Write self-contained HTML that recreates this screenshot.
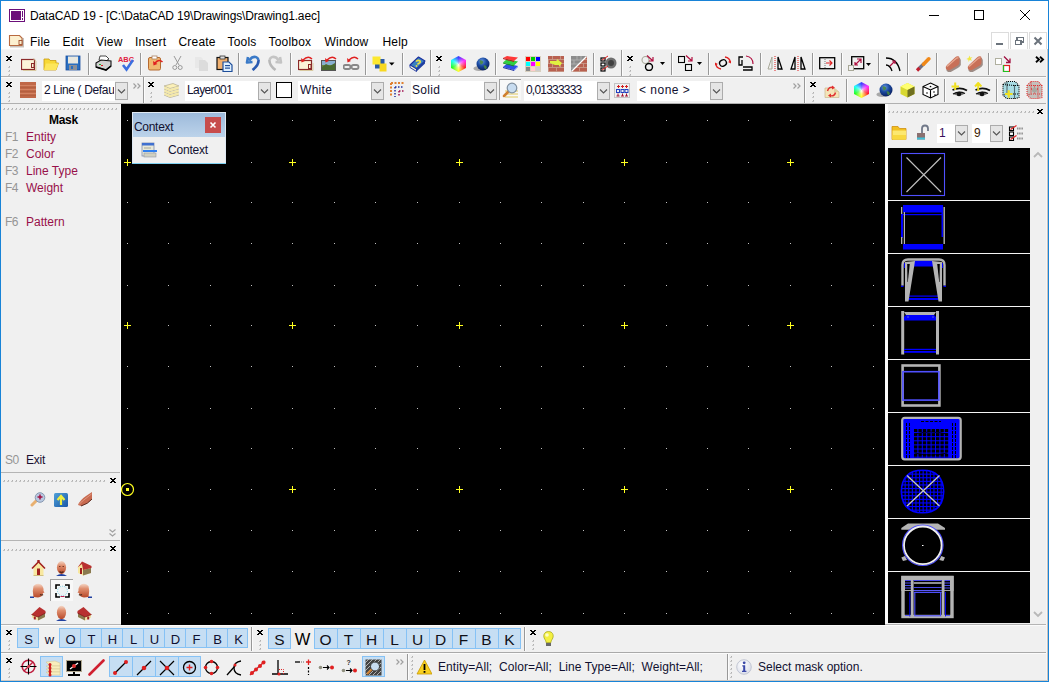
<!DOCTYPE html><html><head><meta charset="utf-8"><style>
html,body{margin:0;padding:0;}
body{width:1049px;height:682px;overflow:hidden;position:relative;background:#f0f0f0;font-family:"Liberation Sans",sans-serif;font-size:12px;}
svg{display:block}
</style></head><body>
<div style="position:absolute;left:1px;top:1px;width:1047px;height:48px;background:#fff"></div>
<svg style="position:absolute;left:9px;top:9px;" width="16" height="13" viewBox="0 0 16 13" shape-rendering="crispEdges"><rect x="0" y="0" width="16" height="13" fill="#6b0f7a"/><rect x="1" y="1" width="14" height="11" fill="#fff"/><rect x="2" y="2" width="10" height="9" fill="#6b0f7a"/><rect x="13" y="2" width="1" height="6" fill="#6b0f7a"/><rect x="13" y="9" width="1" height="2" fill="#6b0f7a"/></svg>
<div style="position:absolute;left:30px;top:9px;font-size:12px;line-height:15px;color:#000;font-weight:normal;white-space:pre;letter-spacing:-0.15px">DataCAD 19 - [C:\DataCAD 19\Drawings\Drawing1.aec]</div>
<div style="position:absolute;left:929px;top:15px;width:10px;height:1px;background:#000"></div>
<div style="position:absolute;left:974px;top:10px;width:10px;height:10px;border:1px solid #000;box-sizing:border-box"></div>
<svg style="position:absolute;left:1019px;top:9px;" width="12" height="12" viewBox="0 0 12 12"><path d="M1 1 L11 11 M11 1 L1 11" stroke="#000" stroke-width="1"/></svg>
<svg style="position:absolute;left:8px;top:34px;" width="17" height="14" viewBox="0 0 17 14"><rect x="2" y="4" width="14" height="9.5" fill="#605040" opacity="0.35"/><path d="M1.5 1.5 L11.5 1.5 L14 4 L14 11.5 L1.5 11.5 Z" fill="#fcf0d0" stroke="#b86a40" stroke-width="1.1"/><rect x="11" y="6.5" width="3" height="4" fill="#fcf0d0" stroke="#a05030" stroke-width="0.9"/></svg>
<div style="position:absolute;left:30px;top:35px;font-size:12px;line-height:15px;color:#000;font-weight:normal;white-space:pre;letter-spacing:0.2px">File</div>
<div style="position:absolute;left:62.5px;top:35px;font-size:12px;line-height:15px;color:#000;font-weight:normal;white-space:pre;letter-spacing:0.2px">Edit</div>
<div style="position:absolute;left:96px;top:35px;font-size:12px;line-height:15px;color:#000;font-weight:normal;white-space:pre;letter-spacing:0.2px">View</div>
<div style="position:absolute;left:135px;top:35px;font-size:12px;line-height:15px;color:#000;font-weight:normal;white-space:pre;letter-spacing:0.2px">Insert</div>
<div style="position:absolute;left:178.5px;top:35px;font-size:12px;line-height:15px;color:#000;font-weight:normal;white-space:pre;letter-spacing:0.2px">Create</div>
<div style="position:absolute;left:227.5px;top:35px;font-size:12px;line-height:15px;color:#000;font-weight:normal;white-space:pre;letter-spacing:0.2px">Tools</div>
<div style="position:absolute;left:268.5px;top:35px;font-size:12px;line-height:15px;color:#000;font-weight:normal;white-space:pre;letter-spacing:0.2px">Toolbox</div>
<div style="position:absolute;left:324.5px;top:35px;font-size:12px;line-height:15px;color:#000;font-weight:normal;white-space:pre;letter-spacing:0.2px">Window</div>
<div style="position:absolute;left:382.5px;top:35px;font-size:12px;line-height:15px;color:#000;font-weight:normal;white-space:pre;letter-spacing:0.2px">Help</div>
<div style="position:absolute;left:991px;top:32px;width:18px;height:18px;border:1px solid #dcdcdc;box-sizing:border-box;background:#fff"></div>
<div style="position:absolute;left:1010px;top:32px;width:18px;height:18px;border:1px solid #dcdcdc;box-sizing:border-box;background:#fff"></div>
<div style="position:absolute;left:1029px;top:32px;width:18px;height:18px;border:1px solid #dcdcdc;box-sizing:border-box;background:#fff"></div>
<div style="position:absolute;left:996px;top:43px;width:7px;height:2px;background:#6b737c"></div>
<svg style="position:absolute;left:1015px;top:37px;" width="9" height="8" viewBox="0 0 9 8" shape-rendering="crispEdges"><rect x="2" y="0" width="7" height="5" fill="none" stroke="#6b737c" stroke-width="2"/><rect x="0" y="3" width="6" height="5" fill="#fff"/><rect x="0.5" y="3.5" width="5.5" height="4" fill="none" stroke="#6b737c" stroke-width="1.5"/></svg>
<svg style="position:absolute;left:1033px;top:36px;" width="10" height="10" viewBox="0 0 10 10"><path d="M1.5 1.5 L8.5 8.5 M8.5 1.5 L1.5 8.5" stroke="#6b737c" stroke-width="2"/></svg>
<div style="position:absolute;left:1px;top:49px;width:1047px;height:27px;background:#f0f0f0"></div>
<div style="position:absolute;left:1px;top:49px;width:1047px;height:1px;background:#f6f6f6"></div>
<div style="position:absolute;left:1px;top:76px;width:1046px;height:1px;background:#b0b0b0"></div>
<div style="position:absolute;left:1px;top:77px;width:1047px;height:1px;background:#fafafa"></div>
<div style="position:absolute;left:1px;top:103px;width:1046px;height:1px;background:#b0b0b0"></div>
<svg style="position:absolute;left:6px;top:56px;" width="6" height="5" viewBox="0 0 6 5" shape-rendering="crispEdges"><rect x="0" y="0" width="1" height="1" fill="#000"/><rect x="1" y="0" width="1" height="1" fill="#000"/><rect x="4" y="0" width="1" height="1" fill="#000"/><rect x="5" y="0" width="1" height="1" fill="#000"/><rect x="1" y="1" width="1" height="1" fill="#000"/><rect x="2" y="1" width="1" height="1" fill="#000"/><rect x="3" y="1" width="1" height="1" fill="#000"/><rect x="4" y="1" width="1" height="1" fill="#000"/><rect x="2" y="2" width="1" height="1" fill="#000"/><rect x="3" y="2" width="1" height="1" fill="#000"/><rect x="1" y="3" width="1" height="1" fill="#000"/><rect x="2" y="3" width="1" height="1" fill="#000"/><rect x="3" y="3" width="1" height="1" fill="#000"/><rect x="4" y="3" width="1" height="1" fill="#000"/><rect x="0" y="4" width="1" height="1" fill="#000"/><rect x="1" y="4" width="1" height="1" fill="#000"/><rect x="4" y="4" width="1" height="1" fill="#000"/><rect x="5" y="4" width="1" height="1" fill="#000"/></svg>
<svg style="position:absolute;left:8px;top:66px;" width="2" height="12" viewBox="0 0 2 12" shape-rendering="crispEdges"><rect x="1" y="0" width="1" height="1" fill="#b0b0b0"/><rect x="0" y="1" width="2" height="1" fill="#c8c8c8"/><rect x="1" y="4" width="1" height="1" fill="#b0b0b0"/><rect x="0" y="5" width="2" height="1" fill="#c8c8c8"/><rect x="1" y="8" width="1" height="1" fill="#b0b0b0"/><rect x="0" y="9" width="2" height="1" fill="#c8c8c8"/></svg>
<svg style="position:absolute;left:21px;top:58px;" width="16" height="13" viewBox="0 0 16 13"><rect x="0.5" y="1.5" width="13" height="10" fill="#fbf3d8" stroke="#8b2a2a" stroke-width="1.2"/><rect x="10.5" y="5.5" width="2.5" height="4" fill="#fbf3d8" stroke="#8b2a2a" stroke-width="1"/><path d="M12 0.5 L15 3 L15 12.5 L2 12.5" stroke="#d8c9a0" fill="none"/></svg>
<svg style="position:absolute;left:43px;top:57px;" width="16" height="14" viewBox="0 0 16 14"><path d="M1 2 L6 2 L7 3.5 L13 3.5 L13 6 L15.5 6 L13 13 L1 13 Z" fill="#f7d835" stroke="#c89a10" stroke-width="0.8"/><path d="M3 6.5 L15.5 6.5 L13 13 L1 13 Z" fill="#fde65a"/></svg>
<svg style="position:absolute;left:65px;top:55px;" width="16" height="16" viewBox="0 0 16 16"><rect x="1" y="1" width="14" height="14" fill="#2a6fc0"/><rect x="1" y="1" width="14" height="14" fill="none" stroke="#1a4fa0" stroke-width="0.8"/><rect x="3" y="1.5" width="10" height="7" fill="#e8e8e0"/><rect x="4" y="10" width="8" height="5" fill="#8a8f98"/><rect x="6" y="11" width="2" height="3" fill="#2a6fc0"/></svg>
<div style="position:absolute;left:89px;top:53px;width:1px;height:22px;background:#fcfcfc"></div>
<div style="position:absolute;left:88px;top:53px;width:1px;height:22px;background:#989898"></div>
<svg style="position:absolute;left:95px;top:55px;" width="17" height="17" viewBox="0 0 17 17"><path d="M5 1 L11 1 L14 4 L9 7 L4 5 Z" fill="#fff" stroke="#333" stroke-width="0.9"/><path d="M1 8 L6 5 L16 6 L16 11 L11 15 L1 12 Z" fill="#d0d0d0" stroke="#111" stroke-width="1.1"/><path d="M1 12 L11 15 L16 11" fill="none" stroke="#000" stroke-width="1.6"/><rect x="4" y="9" width="2" height="1" fill="#2a2"/><rect x="6" y="10" width="2" height="1" fill="#d22"/></svg>
<svg style="position:absolute;left:118px;top:55px;" width="16" height="17" viewBox="0 0 16 17"><text x="0" y="6.5" font-family="Liberation Sans" font-weight="bold" font-size="7" fill="#e02040" textLength="16" lengthAdjust="spacingAndGlyphs">ABC</text><path d="M5 10 L8.5 14.5 L15 5" stroke="#3a6fe0" stroke-width="2.6" fill="none"/></svg>
<div style="position:absolute;left:141px;top:53px;width:1px;height:22px;background:#fcfcfc"></div>
<div style="position:absolute;left:140px;top:53px;width:1px;height:22px;background:#989898"></div>
<svg style="position:absolute;left:147px;top:55px;" width="17" height="16" viewBox="0 0 17 16"><rect x="1.5" y="2.5" width="12" height="12.5" rx="1.5" fill="#f0b870" stroke="#b66a30"/><rect x="5" y="1" width="5" height="3" fill="#fff" stroke="#aa8060" stroke-width="0.8"/><path d="M15.5 7 Q12 3.5 8 8" stroke="#e02020" stroke-width="1.5" fill="none"/><path d="M6 6 L6.5 10.5 L10.5 9" fill="#e02020"/></svg>
<svg style="position:absolute;left:172px;top:55px;" width="11" height="16" viewBox="0 0 11 16"><path d="M2 1 L7 10 M9 1 L4 10" stroke="#999" stroke-width="1"/><circle cx="2.8" cy="12.5" r="2" fill="none" stroke="#999"/><circle cx="8.2" cy="12.5" r="2" fill="none" stroke="#999"/></svg>
<svg style="position:absolute;left:194px;top:56px;" width="15" height="15" viewBox="0 0 15 15"><path d="M1 1 L7 1 L9 3 L9 12 L1 12 Z" fill="#e8e8e8"/><path d="M5 4 L11 4 L14 7 L14 15 L5 15 Z" fill="#dcdcdc"/></svg>
<svg style="position:absolute;left:216px;top:55px;" width="17" height="17" viewBox="0 0 17 17"><rect x="1" y="2.5" width="11" height="12" fill="#f0b070" stroke="#111" stroke-width="1.2"/><rect x="4" y="1" width="5" height="3" fill="#ddd" stroke="#333" stroke-width="0.8"/><path d="M7 7 L13 7 L16 10 L16 16.5 L7 16.5 Z" fill="#dff0ff" stroke="#1e4e9a" stroke-width="1.2"/><rect x="9" y="10" width="5" height="1.2" fill="#1e4e9a"/><rect x="9" y="12.5" width="5" height="1.2" fill="#1e4e9a"/></svg>
<div style="position:absolute;left:239px;top:53px;width:1px;height:22px;background:#fcfcfc"></div>
<div style="position:absolute;left:238px;top:53px;width:1px;height:22px;background:#989898"></div>
<svg style="position:absolute;left:244px;top:55px;" width="17" height="16" viewBox="0 0 17 16"><path d="M14.5 5 Q13 0.5 8 2.5 L5 5.5 M4 2 L3 7.5 L8.5 7" stroke="#3a7ac8" stroke-width="2.6" fill="none" stroke-linejoin="round"/><path d="M14.5 5 Q15 10 8.5 15" stroke="#2a5ab0" stroke-width="2.6" fill="none"/></svg>
<svg style="position:absolute;left:267px;top:55px;" width="17" height="16" viewBox="0 0 17 16"><path d="M2.5 5 Q4 0.5 9 2.5 L12 5.5 M13 2 L14 7.5 L8.5 7" stroke="#c4c4c4" stroke-width="2.6" fill="none" stroke-linejoin="round"/><path d="M2.5 5 Q2 10 8.5 15" stroke="#b8b8b8" stroke-width="2.6" fill="none"/></svg>
<div style="position:absolute;left:291px;top:53px;width:1px;height:22px;background:#fcfcfc"></div>
<div style="position:absolute;left:290px;top:53px;width:1px;height:22px;background:#989898"></div>
<svg style="position:absolute;left:298px;top:55px;" width="16" height="16" viewBox="0 0 16 16"><rect x="0.5" y="5.5" width="13" height="9" fill="#fbf3d8" stroke="#8b2a2a" stroke-width="1.2"/><rect x="10.5" y="9.5" width="2.5" height="4" fill="#fbf3d8" stroke="#8b2a2a" stroke-width="1"/><path d="M1.5 15.5 H15 V8" stroke="#d8c9a0" fill="none"/><path d="M14 4 Q10 0 5 5" stroke="#e02020" stroke-width="1.4" fill="none"/><path d="M3 3 L3.5 7.5 L7 6" fill="#e02020"/></svg>
<svg style="position:absolute;left:321px;top:55px;" width="16" height="16" viewBox="0 0 16 16"><rect x="0.5" y="5.5" width="14" height="10" fill="#6a8a40" stroke="#555"/><rect x="1" y="6" width="13" height="4" fill="#8ab0d0"/><path d="M1 12 L5 9 L9 11 L14 8 L14 15 L1 15 Z" fill="#4a6a30"/><path d="M15 4 Q11 0 6 5" stroke="#e02020" stroke-width="1.4" fill="none"/><path d="M4 3 L4.5 7.5 L8 6" fill="#e02020"/></svg>
<svg style="position:absolute;left:343px;top:55px;" width="17" height="16" viewBox="0 0 17 16"><rect x="0.5" y="10" width="7" height="4" rx="2" fill="none" stroke="#888" stroke-width="1.8"/><rect x="8.5" y="10" width="7" height="4" rx="2" fill="none" stroke="#888" stroke-width="1.8"/><path d="M15 4 Q11 0 6 5" stroke="#e02020" stroke-width="1.4" fill="none"/><path d="M4 3 L4.5 7.5 L8 6" fill="#e02020"/></svg>
<div style="position:absolute;left:366px;top:53px;width:1px;height:22px;background:#fcfcfc"></div>
<div style="position:absolute;left:365px;top:53px;width:1px;height:22px;background:#989898"></div>
<svg style="position:absolute;left:372px;top:56px;" width="25" height="17" viewBox="0 0 25 17"><rect x="3" y="3" width="9.5" height="9.5" fill="#2a5aa8"/><rect x="0.5" y="0.5" width="8" height="8" fill="#fce830"/><rect x="7.5" y="7.5" width="7" height="8" fill="#f8d820"/><path d="M17 6.5 L22.5 6.5 L19.75 9.5 Z" fill="#000"/></svg>
<div style="position:absolute;left:403px;top:53px;width:1px;height:22px;background:#fcfcfc"></div>
<div style="position:absolute;left:402px;top:53px;width:1px;height:22px;background:#989898"></div>
<svg style="position:absolute;left:409px;top:56px;" width="17" height="16" viewBox="0 0 17 16"><path d="M1 9 L9.5 1 L16 5 L7.5 13 Z" fill="#3a80c0" stroke="#1a30a0" stroke-width="1.1" stroke-linejoin="round"/><path d="M1 9 L7.5 13 L7.5 15.5 L1 11.5 Z" fill="#f0f0d0" stroke="#1a30a0" stroke-width="0.9"/><path d="M7.5 13 L16 5 L16 7.5 L7.5 15.5 Z" fill="#2040a0"/><path d="M7 5.5 Q9 3.5 11 5 Q12 6.5 9.5 7.5 L8.5 8.5" stroke="#f0e040" stroke-width="1.6" fill="none"/><circle cx="7.5" cy="10" r="0.9" fill="#f0e040"/></svg>
<div style="position:absolute;left:431px;top:50px;width:1px;height:26px;background:#fcfcfc"></div>
<div style="position:absolute;left:430px;top:50px;width:1px;height:26px;background:#989898"></div>
<svg style="position:absolute;left:436px;top:56px;" width="6" height="5" viewBox="0 0 6 5" shape-rendering="crispEdges"><rect x="0" y="0" width="1" height="1" fill="#000"/><rect x="1" y="0" width="1" height="1" fill="#000"/><rect x="4" y="0" width="1" height="1" fill="#000"/><rect x="5" y="0" width="1" height="1" fill="#000"/><rect x="1" y="1" width="1" height="1" fill="#000"/><rect x="2" y="1" width="1" height="1" fill="#000"/><rect x="3" y="1" width="1" height="1" fill="#000"/><rect x="4" y="1" width="1" height="1" fill="#000"/><rect x="2" y="2" width="1" height="1" fill="#000"/><rect x="3" y="2" width="1" height="1" fill="#000"/><rect x="1" y="3" width="1" height="1" fill="#000"/><rect x="2" y="3" width="1" height="1" fill="#000"/><rect x="3" y="3" width="1" height="1" fill="#000"/><rect x="4" y="3" width="1" height="1" fill="#000"/><rect x="0" y="4" width="1" height="1" fill="#000"/><rect x="1" y="4" width="1" height="1" fill="#000"/><rect x="4" y="4" width="1" height="1" fill="#000"/><rect x="5" y="4" width="1" height="1" fill="#000"/></svg>
<svg style="position:absolute;left:438px;top:66px;" width="2" height="12" viewBox="0 0 2 12" shape-rendering="crispEdges"><rect x="1" y="0" width="1" height="1" fill="#b0b0b0"/><rect x="0" y="1" width="2" height="1" fill="#c8c8c8"/><rect x="1" y="4" width="1" height="1" fill="#b0b0b0"/><rect x="0" y="5" width="2" height="1" fill="#c8c8c8"/><rect x="1" y="8" width="1" height="1" fill="#b0b0b0"/><rect x="0" y="9" width="2" height="1" fill="#c8c8c8"/></svg>
<div style="position:absolute;left:451px;top:56px;width:15px;height:16px;clip-path:polygon(50% 0%,100% 25%,100% 75%,50% 100%,0% 75%,0% 25%);background:radial-gradient(circle at 50% 55%,rgba(255,255,255,0.95) 0,rgba(255,255,255,0.4) 3px,rgba(255,255,255,0) 7px),conic-gradient(from 0deg at 50% 50%,#4040ff,#ff30ff 60deg,#ff2020 120deg,#ffff20 180deg,#20ff20 240deg,#20ffff 300deg,#4040ff 360deg)"></div>
<svg style="position:absolute;left:473px;top:56px;" width="17" height="16" viewBox="0 0 17 16"><ellipse cx="6" cy="12.5" rx="5.5" ry="2.5" fill="#a8a8a8"/><defs><radialGradient id="gl473" cx="0.4" cy="0.3" r="0.7"><stop offset="0" stop-color="#6a9ae8"/><stop offset="0.5" stop-color="#1a4aa0"/><stop offset="1" stop-color="#0a2060"/></radialGradient></defs><circle cx="10" cy="8" r="6.5" fill="url(#gl473)"/><path d="M6.5 4.5 Q9 3.5 10.5 6 Q9 9 7.5 8.5 Z M10.5 9.5 Q13.5 8.5 14 12 L12 13.5 Z" fill="#4a8a40" opacity="0.9"/></svg>
<div style="position:absolute;left:496px;top:53px;width:1px;height:22px;background:#fcfcfc"></div>
<div style="position:absolute;left:495px;top:53px;width:1px;height:22px;background:#989898"></div>
<svg style="position:absolute;left:502px;top:56px;" width="17" height="16" viewBox="0 0 17 16"><path d="M1 11 L5 7.5 L16 10 L12 14 Z" fill="#3050e8"/><path d="M1 12 L12 15 L12 14 L1 11 Z" fill="#2030a0"/><path d="M12 14 L16 10 L16 11 L12 15 Z" fill="#6080f8"/><path d="M1 6.5 L5 3 L16 5.5 L12 9.5 Z" fill="#30d040"/><path d="M1 7.5 L12 10.5 L12 9.5 L1 6.5 Z" fill="#189020"/><path d="M1 2 L5 0 L16 1.5 L12 5 Z" fill="#ff3838"/><path d="M1 3 L12 6 L12 5 L1 2 Z" fill="#b01818"/></svg>
<svg style="position:absolute;left:525px;top:56px;" width="16" height="16" viewBox="0 0 16 16"><rect width="16" height="16" fill="#d8d0c0"/><rect x="1" y="1" width="4" height="4" fill="#f00"/><rect x="6" y="1" width="4" height="4" fill="#0c0"/><rect x="11" y="1" width="4" height="4" fill="#00f"/><rect x="1" y="6" width="4" height="4" fill="#0ff"/><rect x="6" y="6" width="4" height="4" fill="#f0f"/><rect x="11" y="6" width="4" height="4" fill="#ff0"/><rect x="1" y="11" width="4" height="4" fill="#888"/><rect x="6" y="11" width="4" height="4" fill="#fcc"/><rect x="11" y="11" width="4" height="4" fill="#ccc"/></svg>
<svg style="position:absolute;left:548px;top:56px;" width="16" height="16" viewBox="0 0 16 16"><rect width="16" height="16" fill="#b86050"/><path d="M0 3.5 H16 M0 7.5 H16 M0 11.5 H16 M0 15.5 H16" stroke="#c89888" stroke-width="0.9"/><path d="M4.5 0 V3.5 M12.5 0 V3.5 M0.5 3.5 V7.5 M8.5 3.5 V7.5 M4.5 7.5 V11.5 M12.5 7.5 V11.5 M0.5 11.5 V15.5 M8.5 11.5 V15.5" stroke="#c89888" stroke-width="0.9"/><path d="M2 5 L9 5 L9 3 L14 7 L11 11 L11 9 L7 9 L2 7 Z" fill="#e0f040"/></svg>
<svg style="position:absolute;left:571px;top:56px;" width="16" height="16" viewBox="0 0 16 16"><rect width="16" height="16" fill="#b86050"/><path d="M0 3.5 H16 M0 7.5 H16 M0 11.5 H16 M0 15.5 H16" stroke="#c89888" stroke-width="0.9"/><path d="M4.5 0 V3.5 M12.5 0 V3.5 M0.5 3.5 V7.5 M8.5 3.5 V7.5 M4.5 7.5 V11.5 M12.5 7.5 V11.5 M0.5 11.5 V15.5 M8.5 11.5 V15.5" stroke="#c89888" stroke-width="0.9"/><path d="M0 0 L16 0 L0 16 Z" fill="#8c8c8c"/><path d="M0 4 H12 M0 8 H8 M0 12 H4 M6 0 V4 M3 4 V8 M10 0 V4" stroke="#b0b0b0" stroke-width="0.9"/><path d="M0.5 15.5 L15.5 0.5" stroke="#fff" stroke-width="1.3"/></svg>
<div style="position:absolute;left:594px;top:53px;width:1px;height:22px;background:#fcfcfc"></div>
<div style="position:absolute;left:593px;top:53px;width:1px;height:22px;background:#989898"></div>
<svg style="position:absolute;left:600px;top:55px;" width="17" height="17" viewBox="0 0 17 17"><circle cx="11" cy="8" r="5.5" fill="#707070"/><circle cx="11" cy="8" r="3" fill="#404040"/><rect x="1" y="3" width="4" height="3" fill="#fff" stroke="#000" stroke-width="1.2"/><rect x="1" y="8" width="4" height="3" fill="#fff" stroke="#000" stroke-width="1.2"/><rect x="1" y="13" width="4" height="3" fill="#fff" stroke="#000" stroke-width="1.2"/><path d="M2 5 L8 1 M2 15 L8 11" stroke="#e02020" stroke-width="1"/></svg>
<div style="position:absolute;left:622px;top:50px;width:1px;height:26px;background:#fcfcfc"></div>
<div style="position:absolute;left:621px;top:50px;width:1px;height:26px;background:#989898"></div>
<svg style="position:absolute;left:627px;top:56px;" width="6" height="5" viewBox="0 0 6 5" shape-rendering="crispEdges"><rect x="0" y="0" width="1" height="1" fill="#000"/><rect x="1" y="0" width="1" height="1" fill="#000"/><rect x="4" y="0" width="1" height="1" fill="#000"/><rect x="5" y="0" width="1" height="1" fill="#000"/><rect x="1" y="1" width="1" height="1" fill="#000"/><rect x="2" y="1" width="1" height="1" fill="#000"/><rect x="3" y="1" width="1" height="1" fill="#000"/><rect x="4" y="1" width="1" height="1" fill="#000"/><rect x="2" y="2" width="1" height="1" fill="#000"/><rect x="3" y="2" width="1" height="1" fill="#000"/><rect x="1" y="3" width="1" height="1" fill="#000"/><rect x="2" y="3" width="1" height="1" fill="#000"/><rect x="3" y="3" width="1" height="1" fill="#000"/><rect x="4" y="3" width="1" height="1" fill="#000"/><rect x="0" y="4" width="1" height="1" fill="#000"/><rect x="1" y="4" width="1" height="1" fill="#000"/><rect x="4" y="4" width="1" height="1" fill="#000"/><rect x="5" y="4" width="1" height="1" fill="#000"/></svg>
<svg style="position:absolute;left:629px;top:66px;" width="2" height="12" viewBox="0 0 2 12" shape-rendering="crispEdges"><rect x="1" y="0" width="1" height="1" fill="#b0b0b0"/><rect x="0" y="1" width="2" height="1" fill="#c8c8c8"/><rect x="1" y="4" width="1" height="1" fill="#b0b0b0"/><rect x="0" y="5" width="2" height="1" fill="#c8c8c8"/><rect x="1" y="8" width="1" height="1" fill="#b0b0b0"/><rect x="0" y="9" width="2" height="1" fill="#c8c8c8"/></svg>
<svg style="position:absolute;left:641px;top:55px;" width="25" height="16" viewBox="0 0 25 16"><circle cx="4.5" cy="5" r="3.5" fill="none" stroke="#a8a898" stroke-width="1.1"/><circle cx="8" cy="12" r="3.5" fill="none" stroke="#000" stroke-width="1.4"/><path d="M6 0.5 L12 6 M12 2 L12 6 L8 6" stroke="#b01040" stroke-width="1.2" fill="none"/><path d="M19 7 L24 7 L21.5 10 Z" fill="#000"/></svg>
<div style="position:absolute;left:672px;top:53px;width:1px;height:22px;background:#fcfcfc"></div>
<div style="position:absolute;left:671px;top:53px;width:1px;height:22px;background:#989898"></div>
<svg style="position:absolute;left:678px;top:55px;" width="25" height="16" viewBox="0 0 25 16"><rect x="0.5" y="1.5" width="6" height="6" fill="none" stroke="#000" stroke-width="1.1"/><rect x="7.5" y="9.5" width="6" height="6" fill="none" stroke="#000" stroke-width="1.1"/><path d="M8 0.5 L14 6 M14 2 L14 6 L10 6" stroke="#b01040" stroke-width="1.2" fill="none"/><path d="M19 7 L24 7 L21.5 10 Z" fill="#000"/></svg>
<div style="position:absolute;left:709px;top:53px;width:1px;height:22px;background:#fcfcfc"></div>
<div style="position:absolute;left:708px;top:53px;width:1px;height:22px;background:#989898"></div>
<svg style="position:absolute;left:715px;top:55px;" width="17" height="16" viewBox="0 0 17 16"><rect x="4.5" y="5" width="7" height="6" rx="3" transform="rotate(-30 8 8)" fill="none" stroke="#000" stroke-width="1.3"/><path d="M10 2 Q15 3 15 7 M6 14 Q1 13 1 9" stroke="#e02020" stroke-width="1.3" fill="none"/><path d="M13 7 L16 5.5 L16 8.5 Z M3 9 L0 10.5 L0 7.5 Z" fill="#e02020"/></svg>
<svg style="position:absolute;left:738px;top:55px;" width="17" height="16" viewBox="0 0 17 16"><path d="M5 2 L1 2 L1 10 L4 10 L4 5 M5 12 L14 12 L14 15 L5 15" stroke="#000" stroke-width="1.3" fill="none"/><path d="M8 1 Q15 2 15 9" stroke="#b01040" stroke-width="1.2" fill="none"/></svg>
<div style="position:absolute;left:761px;top:53px;width:1px;height:22px;background:#fcfcfc"></div>
<div style="position:absolute;left:760px;top:53px;width:1px;height:22px;background:#989898"></div>
<svg style="position:absolute;left:767px;top:55px;" width="17" height="17" viewBox="0 0 17 17"><path d="M5 2 L1 14 L5 14 Z" fill="none" stroke="#a8a898" stroke-width="1"/><path d="M11 2 L15 14 L11 14 Z" fill="none" stroke="#000" stroke-width="1.3"/><path d="M8 1 V16" stroke="#e02020" stroke-width="1" stroke-dasharray="1 1"/></svg>
<svg style="position:absolute;left:790px;top:55px;" width="17" height="17" viewBox="0 0 17 17"><path d="M5 2 L1 14 L5 14 Z" fill="none" stroke="#000" stroke-width="1.3"/><path d="M11 2 L15 14 L11 14 Z" fill="none" stroke="#000" stroke-width="1.3"/><path d="M8 1 V16" stroke="#e02020" stroke-width="1" stroke-dasharray="1 1"/></svg>
<div style="position:absolute;left:813px;top:53px;width:1px;height:22px;background:#fcfcfc"></div>
<div style="position:absolute;left:812px;top:53px;width:1px;height:22px;background:#989898"></div>
<svg style="position:absolute;left:819px;top:57px;" width="17" height="13" viewBox="0 0 17 13"><rect x="0.7" y="0.7" width="15" height="11" fill="none" stroke="#000" stroke-width="1.3"/><path d="M6 2 V11" stroke="#777" stroke-dasharray="1 1"/><path d="M7 6 H13 M10.5 3.5 L13 6 L10.5 8.5" stroke="#e02020" stroke-width="1.1" fill="none"/></svg>
<div style="position:absolute;left:842px;top:53px;width:1px;height:22px;background:#fcfcfc"></div>
<div style="position:absolute;left:841px;top:53px;width:1px;height:22px;background:#989898"></div>
<svg style="position:absolute;left:848px;top:55px;" width="24" height="17" viewBox="0 0 24 17"><rect x="3.7" y="1.7" width="12" height="12" fill="none" stroke="#000" stroke-width="1.3"/><rect x="0.5" y="10.5" width="5" height="5" fill="#f0f0f0" stroke="#a8a898"/><path d="M7 10 L13 4 M9 4 H13 V8 M7 7 V10 H10" stroke="#b01040" stroke-width="1.2" fill="none"/><path d="M18 8 L23 8 L20.5 11 Z" fill="#000"/></svg>
<div style="position:absolute;left:879px;top:53px;width:1px;height:22px;background:#fcfcfc"></div>
<div style="position:absolute;left:878px;top:53px;width:1px;height:22px;background:#989898"></div>
<svg style="position:absolute;left:885px;top:55px;" width="16" height="17" viewBox="0 0 16 17"><path d="M1 3 Q12 3 15 16" stroke="#000" stroke-width="1.3" fill="none"/><path d="M1 10 Q5 10 7 16" stroke="#000" stroke-width="1.3" fill="none"/><path d="M5 11 L10 6 M7 6 H10 V9" stroke="#b01040" stroke-width="1.2" fill="none"/></svg>
<div style="position:absolute;left:908px;top:53px;width:1px;height:22px;background:#fcfcfc"></div>
<div style="position:absolute;left:907px;top:53px;width:1px;height:22px;background:#989898"></div>
<svg style="position:absolute;left:914px;top:55px;" width="17" height="17" viewBox="0 0 17 17"><path d="M12 2 L15.5 5.5" stroke="#f08010" stroke-width="0.1"/><path d="M4.8 13.8 L10 8.6" stroke="#707080" stroke-width="3.4"/><path d="M9.5 9.2 L14.8 3.8" stroke="#f08818" stroke-width="3.6" stroke-linecap="round"/><path d="M3 15.5 L5.5 13" stroke="#c02030" stroke-width="3.2"/></svg>
<div style="position:absolute;left:937px;top:53px;width:1px;height:22px;background:#fcfcfc"></div>
<div style="position:absolute;left:936px;top:53px;width:1px;height:22px;background:#989898"></div>
<svg style="position:absolute;left:944px;top:55px;" width="17" height="17" viewBox="0 0 17 17"><path d="M2 15 Q1 13 3 11 L11 3 Q13 1 15 2 L16 4 L16 9 Q15 11 13 12 L6 16 Q4 17 2 15 Z" fill="#5a3a30" opacity="0.55" transform="translate(0.8,1)"/><path d="M2 14 Q1 12 3 10 L11 2.5 Q13 0.5 15 1.5 L15.5 3 L15.5 8 Q15 10 13 11 L6 15 Q4 16 2 14 Z" fill="#c87058"/><path d="M3 11.5 L11.5 4 Q13 2.5 14.5 3" stroke="#e8a890" stroke-width="1.2" fill="none"/></svg>
<svg style="position:absolute;left:966px;top:55px;" width="17" height="17" viewBox="0 0 17 17"><path d="M3.5 0.5 L4.2 2.6 L6.5 2.2 L4.8 3.8 L6 5.8 L3.7 5 L2.5 7 L2.4 4.7 L0.3 4 L2.5 3 Z" fill="#f0e840"/><path d="M2 15 Q1 13 3 11 L11 3 Q13 1 15 2 L16 4 L16 9 Q15 11 13 12 L6 16 Q4 17 2 15 Z" fill="#5a3a30" opacity="0.55" transform="translate(0.8,1)"/><path d="M2 14 Q1 12 3 10 L11 2.5 Q13 0.5 15 1.5 L15.5 3 L15.5 8 Q15 10 13 11 L6 15 Q4 16 2 14 Z" fill="#c87058"/><path d="M3 11.5 L11.5 4 Q13 2.5 14.5 3" stroke="#e8a890" stroke-width="1.2" fill="none"/></svg>
<div style="position:absolute;left:989px;top:53px;width:1px;height:22px;background:#fcfcfc"></div>
<div style="position:absolute;left:988px;top:53px;width:1px;height:22px;background:#989898"></div>
<svg style="position:absolute;left:995px;top:55px;" width="17" height="17" viewBox="0 0 17 17"><rect x="0.5" y="3.5" width="6" height="6" fill="#fff" stroke="#b0b0a0"/><path d="M9 1.5 L15 7.5 M15 3.5 V7.5 H11" stroke="#a01040" stroke-width="1.3" fill="none"/><rect x="8.5" y="10.5" width="6" height="6" fill="#fff" stroke="#e02020" stroke-width="1.2"/><path d="M8.5 10 V16.5 H14" stroke="#20c020" stroke-width="1.2" fill="none"/></svg>
<svg style="position:absolute;left:1035px;top:56px;" width="10" height="7" viewBox="0 0 10 7"><path d="M1 0.8 L4 3.5 L1 6.2 M5 0.8 L8 3.5 L5 6.2" stroke="#000" stroke-width="1.9" fill="none"/></svg>
<svg style="position:absolute;left:6px;top:82px;" width="6" height="5" viewBox="0 0 6 5" shape-rendering="crispEdges"><rect x="0" y="0" width="1" height="1" fill="#000"/><rect x="1" y="0" width="1" height="1" fill="#000"/><rect x="4" y="0" width="1" height="1" fill="#000"/><rect x="5" y="0" width="1" height="1" fill="#000"/><rect x="1" y="1" width="1" height="1" fill="#000"/><rect x="2" y="1" width="1" height="1" fill="#000"/><rect x="3" y="1" width="1" height="1" fill="#000"/><rect x="4" y="1" width="1" height="1" fill="#000"/><rect x="2" y="2" width="1" height="1" fill="#000"/><rect x="3" y="2" width="1" height="1" fill="#000"/><rect x="1" y="3" width="1" height="1" fill="#000"/><rect x="2" y="3" width="1" height="1" fill="#000"/><rect x="3" y="3" width="1" height="1" fill="#000"/><rect x="4" y="3" width="1" height="1" fill="#000"/><rect x="0" y="4" width="1" height="1" fill="#000"/><rect x="1" y="4" width="1" height="1" fill="#000"/><rect x="4" y="4" width="1" height="1" fill="#000"/><rect x="5" y="4" width="1" height="1" fill="#000"/></svg>
<svg style="position:absolute;left:8px;top:92px;" width="2" height="12" viewBox="0 0 2 12" shape-rendering="crispEdges"><rect x="1" y="0" width="1" height="1" fill="#b0b0b0"/><rect x="0" y="1" width="2" height="1" fill="#c8c8c8"/><rect x="1" y="4" width="1" height="1" fill="#b0b0b0"/><rect x="0" y="5" width="2" height="1" fill="#c8c8c8"/><rect x="1" y="8" width="1" height="1" fill="#b0b0b0"/><rect x="0" y="9" width="2" height="1" fill="#c8c8c8"/></svg>
<svg style="position:absolute;left:20px;top:82px;" width="16" height="16" viewBox="0 0 16 16"><rect width="16" height="16" fill="#c06848"/><path d="M0 3.5 H16 M0 7.5 H16 M0 11.5 H16" stroke="#d88a6a" stroke-width="0.8"/><path d="M0 5.5 H16 M0 9.5 H16 M0 13.5 H16" stroke="#a85838" stroke-width="0.5"/></svg>
<div style="position:absolute;left:42px;top:81px;width:73px;height:20px;background:#fff"></div>
<div style="position:absolute;left:44px;top:83px;width:70px;height:18px;overflow:hidden;font-size:12px;line-height:15px;color:#101030;white-space:pre;letter-spacing:-0.35px">2 Line ( Default )</div>
<div style="position:absolute;left:115px;top:82px;width:13px;height:18px;background:#e5e5e5;border:1px solid #acacac;box-sizing:border-box"></div>
<svg style="position:absolute;left:117px;top:88px;" width="9" height="6" viewBox="0 0 9 6"><path d="M1 1.5 L4.5 5 L8 1.5" stroke="#555" stroke-width="1.1" fill="none"/></svg>
<div style="position:absolute;left:114px;top:81px;width:1px;height:19px;background:#fff"></div>
<svg style="position:absolute;left:133px;top:83px;" width="8" height="6" viewBox="0 0 8 6"><path d="M0.5 0.5 L3 3 L0.5 5.5 M4.5 0.5 L7 3 L4.5 5.5" stroke="#a0a0a0" stroke-width="1.2" fill="none"/></svg>
<div style="position:absolute;left:144px;top:77px;width:1px;height:26px;background:#fcfcfc"></div>
<div style="position:absolute;left:143px;top:77px;width:1px;height:26px;background:#989898"></div>
<svg style="position:absolute;left:148px;top:82px;" width="6" height="5" viewBox="0 0 6 5" shape-rendering="crispEdges"><rect x="0" y="0" width="1" height="1" fill="#000"/><rect x="1" y="0" width="1" height="1" fill="#000"/><rect x="4" y="0" width="1" height="1" fill="#000"/><rect x="5" y="0" width="1" height="1" fill="#000"/><rect x="1" y="1" width="1" height="1" fill="#000"/><rect x="2" y="1" width="1" height="1" fill="#000"/><rect x="3" y="1" width="1" height="1" fill="#000"/><rect x="4" y="1" width="1" height="1" fill="#000"/><rect x="2" y="2" width="1" height="1" fill="#000"/><rect x="3" y="2" width="1" height="1" fill="#000"/><rect x="1" y="3" width="1" height="1" fill="#000"/><rect x="2" y="3" width="1" height="1" fill="#000"/><rect x="3" y="3" width="1" height="1" fill="#000"/><rect x="4" y="3" width="1" height="1" fill="#000"/><rect x="0" y="4" width="1" height="1" fill="#000"/><rect x="1" y="4" width="1" height="1" fill="#000"/><rect x="4" y="4" width="1" height="1" fill="#000"/><rect x="5" y="4" width="1" height="1" fill="#000"/></svg>
<svg style="position:absolute;left:150px;top:92px;" width="2" height="12" viewBox="0 0 2 12" shape-rendering="crispEdges"><rect x="1" y="0" width="1" height="1" fill="#b0b0b0"/><rect x="0" y="1" width="2" height="1" fill="#c8c8c8"/><rect x="1" y="4" width="1" height="1" fill="#b0b0b0"/><rect x="0" y="5" width="2" height="1" fill="#c8c8c8"/><rect x="1" y="8" width="1" height="1" fill="#b0b0b0"/><rect x="0" y="9" width="2" height="1" fill="#c8c8c8"/></svg>
<svg style="position:absolute;left:163px;top:82px;" width="17" height="17" viewBox="0 0 17 17"><path d="M1 4 L10 1.5 L16 4 L7 6.5 Z" fill="#fbf0b8" stroke="#a8a080" stroke-width="0.6"/><path d="M1 7 L7 9.5 L16 7 M1 10 L7 12.5 L16 10 M1 13 L7 15.5 L16 13" stroke="#a8a080" stroke-width="0.7" fill="none"/><path d="M1.3 4.5 L7 7 L15.7 4.5 L15.7 6.7 L7 9.2 L1.3 6.7 Z M1.3 7.5 L7 10 L15.7 7.5 L15.7 9.7 L7 12.2 L1.3 9.7 Z M1.3 10.5 L7 13 L15.7 10.5 L15.7 12.7 L7 15.2 L1.3 12.7 Z" fill="#f4e8a8"/></svg>
<div style="position:absolute;left:185px;top:81px;width:73px;height:20px;background:#fff"></div>
<div style="position:absolute;left:187px;top:83px;width:70px;height:18px;overflow:hidden;font-size:12px;line-height:15px;color:#101030;white-space:pre;letter-spacing:-0.6px">Layer001</div>
<div style="position:absolute;left:258px;top:82px;width:13px;height:18px;background:#e5e5e5;border:1px solid #acacac;box-sizing:border-box"></div>
<svg style="position:absolute;left:260px;top:88px;" width="9" height="6" viewBox="0 0 9 6"><path d="M1 1.5 L4.5 5 L8 1.5" stroke="#555" stroke-width="1.1" fill="none"/></svg>
<div style="position:absolute;left:276px;top:82px;width:16px;height:16px;background:#fff;border:1px solid #000;box-sizing:border-box"></div>
<div style="position:absolute;left:298px;top:81px;width:73px;height:20px;background:#fff"></div>
<div style="position:absolute;left:300px;top:83px;width:70px;height:18px;overflow:hidden;font-size:12px;line-height:15px;color:#101030;white-space:pre;letter-spacing:0.3px">White</div>
<div style="position:absolute;left:371px;top:82px;width:13px;height:18px;background:#e5e5e5;border:1px solid #acacac;box-sizing:border-box"></div>
<svg style="position:absolute;left:373px;top:88px;" width="9" height="6" viewBox="0 0 9 6"><path d="M1 1.5 L4.5 5 L8 1.5" stroke="#555" stroke-width="1.1" fill="none"/></svg>
<svg style="position:absolute;left:390px;top:82px;" width="15" height="16" viewBox="0 0 15 16"><path d="M1 1 H14 M1 1 V15" stroke="#e08030" stroke-width="2" stroke-dasharray="2 1.5" fill="none"/><path d="M5 5 H14 M5 5 V15" stroke="#2030a0" stroke-width="1.5" stroke-dasharray="1.5 1.5" fill="none"/><path d="M9 9 H14 M9 9 V15" stroke="#a01050" stroke-width="1.5" stroke-dasharray="1.5 1.5" fill="none"/></svg>
<div style="position:absolute;left:411px;top:81px;width:73px;height:20px;background:#fff"></div>
<div style="position:absolute;left:412px;top:83px;width:71px;height:18px;overflow:hidden;font-size:12px;line-height:15px;color:#101030;white-space:pre;letter-spacing:0.3px">Solid</div>
<div style="position:absolute;left:484px;top:82px;width:13px;height:18px;background:#e5e5e5;border:1px solid #acacac;box-sizing:border-box"></div>
<svg style="position:absolute;left:486px;top:88px;" width="9" height="6" viewBox="0 0 9 6"><path d="M1 1.5 L4.5 5 L8 1.5" stroke="#555" stroke-width="1.1" fill="none"/></svg>
<div style="position:absolute;left:499px;top:79px;width:22px;height:21px;background:#f8f8f8;border-top:1px solid #a0a0a0;border-left:1px solid #a0a0a0;box-sizing:border-box"></div>
<svg style="position:absolute;left:502px;top:82px;" width="16" height="16" viewBox="0 0 16 16"><path d="M3 9 H16 M3 12 H16 M3 15 H16" stroke="#e8d890" stroke-width="1.6"/><line x1="2" y1="14" x2="7" y2="9" stroke="#d08030" stroke-width="2.5" stroke-linecap="round"/><circle cx="10" cy="6" r="4.8" fill="#c8dcf0" stroke="#8090a0" stroke-width="1.2"/></svg>
<div style="position:absolute;left:524px;top:81px;width:73px;height:20px;background:#fff"></div>
<div style="position:absolute;left:526px;top:83px;width:70px;height:18px;overflow:hidden;font-size:12px;line-height:15px;color:#101030;white-space:pre;letter-spacing:-0.8px">0,01333333</div>
<div style="position:absolute;left:597px;top:82px;width:13px;height:18px;background:#e5e5e5;border:1px solid #acacac;box-sizing:border-box"></div>
<svg style="position:absolute;left:599px;top:88px;" width="9" height="6" viewBox="0 0 9 6"><path d="M1 1.5 L4.5 5 L8 1.5" stroke="#555" stroke-width="1.1" fill="none"/></svg>
<svg style="position:absolute;left:614px;top:83px;" width="16" height="15" viewBox="0 0 16 15"><rect x="0.5" y="0.5" width="15" height="14" fill="none" stroke="#999" stroke-dasharray="1 1"/><path d="M3 3.5 H6 M4.5 2 V5 M7 3.5 H10 M8.5 2 V5 M11 3.5 H14 M12.5 2 V5" stroke="#d02020"/><rect x="2.5" y="6.5" width="3" height="3" fill="none" stroke="#2040c0"/><rect x="7" y="6.5" width="3" height="3" fill="none" stroke="#2040c0"/><rect x="11" y="6.5" width="3" height="3" fill="none" stroke="#2040c0"/><path d="M4 10.5 V13 M2.5 13 H5.5 M8.5 10.5 V13 M7 13 H10 M12.5 10.5 V13 M11 13 H14" stroke="#a01030"/></svg>
<div style="position:absolute;left:637px;top:81px;width:73px;height:20px;background:#fff"></div>
<div style="position:absolute;left:639px;top:83px;width:70px;height:18px;overflow:hidden;font-size:12px;line-height:15px;color:#101030;white-space:pre;letter-spacing:0.5px">&lt; none &gt;</div>
<div style="position:absolute;left:710px;top:82px;width:13px;height:18px;background:#e5e5e5;border:1px solid #acacac;box-sizing:border-box"></div>
<svg style="position:absolute;left:712px;top:88px;" width="9" height="6" viewBox="0 0 9 6"><path d="M1 1.5 L4.5 5 L8 1.5" stroke="#555" stroke-width="1.1" fill="none"/></svg>
<svg style="position:absolute;left:793px;top:83px;" width="8" height="6" viewBox="0 0 8 6"><path d="M0.5 0.5 L3 3 L0.5 5.5 M4.5 0.5 L7 3 L4.5 5.5" stroke="#a0a0a0" stroke-width="1.2" fill="none"/></svg>
<div style="position:absolute;left:805px;top:77px;width:1px;height:26px;background:#fcfcfc"></div>
<div style="position:absolute;left:804px;top:77px;width:1px;height:26px;background:#989898"></div>
<svg style="position:absolute;left:810px;top:82px;" width="6" height="5" viewBox="0 0 6 5" shape-rendering="crispEdges"><rect x="0" y="0" width="1" height="1" fill="#000"/><rect x="1" y="0" width="1" height="1" fill="#000"/><rect x="4" y="0" width="1" height="1" fill="#000"/><rect x="5" y="0" width="1" height="1" fill="#000"/><rect x="1" y="1" width="1" height="1" fill="#000"/><rect x="2" y="1" width="1" height="1" fill="#000"/><rect x="3" y="1" width="1" height="1" fill="#000"/><rect x="4" y="1" width="1" height="1" fill="#000"/><rect x="2" y="2" width="1" height="1" fill="#000"/><rect x="3" y="2" width="1" height="1" fill="#000"/><rect x="1" y="3" width="1" height="1" fill="#000"/><rect x="2" y="3" width="1" height="1" fill="#000"/><rect x="3" y="3" width="1" height="1" fill="#000"/><rect x="4" y="3" width="1" height="1" fill="#000"/><rect x="0" y="4" width="1" height="1" fill="#000"/><rect x="1" y="4" width="1" height="1" fill="#000"/><rect x="4" y="4" width="1" height="1" fill="#000"/><rect x="5" y="4" width="1" height="1" fill="#000"/></svg>
<svg style="position:absolute;left:812px;top:92px;" width="2" height="12" viewBox="0 0 2 12" shape-rendering="crispEdges"><rect x="1" y="0" width="1" height="1" fill="#b0b0b0"/><rect x="0" y="1" width="2" height="1" fill="#c8c8c8"/><rect x="1" y="4" width="1" height="1" fill="#b0b0b0"/><rect x="0" y="5" width="2" height="1" fill="#c8c8c8"/><rect x="1" y="8" width="1" height="1" fill="#b0b0b0"/><rect x="0" y="9" width="2" height="1" fill="#c8c8c8"/></svg>
<svg style="position:absolute;left:824px;top:83px;" width="17" height="15" viewBox="0 0 17 15"><path d="M1 5 L10 5 L15 9 L15 14.5 L1 14.5 Z" fill="#f4e4b8" stroke="#c8b890" stroke-width="0.7"/><path d="M10 5 L10 9 L15 9" fill="#e0d0a0"/><path d="M3.5 8 Q5 3 9.5 4.5 M11.5 9.5 Q10.5 14 5.5 12.5" stroke="#e03030" stroke-width="1.5" fill="none"/><path d="M8 2.5 L11 4.8 L8 6.5 Z M7 10.5 L4 12.5 L7 14.5 Z" fill="#e03030"/></svg>
<div style="position:absolute;left:847px;top:79px;width:1px;height:23px;background:#fcfcfc"></div>
<div style="position:absolute;left:846px;top:79px;width:1px;height:23px;background:#989898"></div>
<div style="position:absolute;left:854px;top:82px;width:15px;height:16px;clip-path:polygon(50% 0%,100% 25%,100% 75%,50% 100%,0% 75%,0% 25%);background:radial-gradient(circle at 50% 55%,rgba(255,255,255,0.95) 0,rgba(255,255,255,0.4) 3px,rgba(255,255,255,0) 7px),conic-gradient(from 0deg at 50% 50%,#4040ff,#ff30ff 60deg,#ff2020 120deg,#ffff20 180deg,#20ff20 240deg,#20ffff 300deg,#4040ff 360deg)"></div>
<svg style="position:absolute;left:876px;top:82px;" width="17" height="16" viewBox="0 0 17 16"><ellipse cx="6" cy="12.5" rx="5.5" ry="2.5" fill="#a8a8a8"/><defs><radialGradient id="gl876" cx="0.4" cy="0.3" r="0.7"><stop offset="0" stop-color="#6a9ae8"/><stop offset="0.5" stop-color="#1a4aa0"/><stop offset="1" stop-color="#0a2060"/></radialGradient></defs><circle cx="10" cy="8" r="6.5" fill="url(#gl876)"/><path d="M6.5 4.5 Q9 3.5 10.5 6 Q9 9 7.5 8.5 Z M10.5 9.5 Q13.5 8.5 14 12 L12 13.5 Z" fill="#4a8a40" opacity="0.9"/></svg>
<svg style="position:absolute;left:900px;top:82px;" width="15" height="16" viewBox="0 0 15 16"><path d="M7.5 1 L14.5 4.5 L14.5 12 L7.5 15.5 L0.5 12 L0.5 4.5 Z" fill="#d8d830"/><path d="M0.5 4.5 L7.5 8 L14.5 4.5 L7.5 1 Z" fill="#ffff70"/><path d="M7.5 8 L14.5 4.5 L14.5 12 L7.5 15.5 Z" fill="#707020"/></svg>
<svg style="position:absolute;left:922px;top:82px;" width="17" height="17" viewBox="0 0 17 17"><path d="M8.5 1 L16 4.5 L16 12.5 L8.5 16 L1 12.5 L1 4.5 Z M1 4.5 L8.5 8 L16 4.5 M8.5 8 V16" fill="#fff" stroke="#000" stroke-width="1.1"/><circle cx="8.5" cy="4.5" r="0.8"/><circle cx="5" cy="11" r="0.8"/><circle cx="12" cy="10" r="0.8"/><circle cx="13" cy="13" r="0.8"/></svg>
<div style="position:absolute;left:945px;top:79px;width:1px;height:23px;background:#fcfcfc"></div>
<div style="position:absolute;left:944px;top:79px;width:1px;height:23px;background:#989898"></div>
<svg style="position:absolute;left:951px;top:82px;" width="17" height="17" viewBox="0 0 17 17"><path d="M1.5 8 Q9 4.5 16 8.5" stroke="#111" stroke-width="1.8" fill="none"/><path d="M2 12 Q8 8 14 11.5 Q9 15.5 2 12 Z" fill="#707070"/><path d="M2 12 Q8 8.5 14 11.5" stroke="#111" stroke-width="1.2" fill="none"/><circle cx="8" cy="12" r="2.3" fill="#111"/><path d="M0.5 4.5 H8 M4.2 0.5 V8" stroke="#f0e020" stroke-width="2"/></svg>
<svg style="position:absolute;left:974px;top:82px;" width="17" height="17" viewBox="0 0 17 17"><path d="M1.5 8 Q9 4.5 16 8.5" stroke="#111" stroke-width="1.8" fill="none"/><path d="M2 12 Q8 8 14 11.5 Q9 15.5 2 12 Z" fill="#707070"/><path d="M2 12 Q8 8.5 14 11.5" stroke="#111" stroke-width="1.2" fill="none"/><circle cx="8" cy="12" r="2.3" fill="#111"/><path d="M4.2 9 V1.5 M1 4.5 L4.2 1 L7.4 4.5" stroke="#f0e020" stroke-width="2" fill="none"/></svg>
<div style="position:absolute;left:997px;top:79px;width:1px;height:23px;background:#fcfcfc"></div>
<div style="position:absolute;left:996px;top:79px;width:1px;height:23px;background:#989898"></div>
<svg style="position:absolute;left:1002px;top:81px;" width="18" height="18" viewBox="0 0 18 18"><path d="M1 3.5 L5 0.5 L13 0.5 L17 4.5 L17 16.5 L13.5 17.5 L4.5 17.5 L1 14 Z" fill="#a8dce4"/><path d="M1 3.5 L5 0.5 L13 0.5 L17 4.5 L17 16.5 L13.5 17.5 L4.5 17.5 L1 14 Z M1 3.5 L12.5 4.5 L17 4.5 M12.5 4.5 V17.5 M5 0.5 V13 L1 14 M5 13 H17" stroke="#000" stroke-width="1.1" stroke-dasharray="1 1" fill="none"/><path d="M3 13 H10.5 M6.7 9.3 V16.7" stroke="#f0e020" stroke-width="2.2"/></svg>
<svg style="position:absolute;left:1026px;top:81px;" width="17" height="18" viewBox="0 0 17 18"><path d="M1 4.5 L5 0.5 L12 0.5 L16 4.5 L16 16.5 L12 17.5 L4.5 17.5 L1 14 Z" fill="#c4c0bc"/><path d="M1 4.5 L5 0.5 L12 0.5 L16 4.5 L16 16.5 L12 17.5 L4.5 17.5 L1 14 Z M1 4.5 L12 4.5 L16 4.5 M12 4.5 V17.5 M5 0.5 V13 L1 14 M5 13 H16 M5 8 H12 M8.5 4.5 V13" stroke="#e03030" stroke-width="1.1" stroke-dasharray="1 1" fill="none"/><circle cx="8.5" cy="9" r="2.5" fill="#a8a8a0"/></svg>
<div style="position:absolute;left:121px;top:104px;width:764px;height:521px;background:#000"></div>
<svg style="position:absolute;left:121px;top:104px;" width="764" height="521" viewBox="0 0 764 521" shape-rendering="crispEdges"><rect x="6" y="16" width="1" height="1" fill="#c0c0c0"/><rect x="47" y="16" width="1" height="1" fill="#c0c0c0"/><rect x="89" y="16" width="1" height="1" fill="#c0c0c0"/><rect x="130" y="16" width="1" height="1" fill="#c0c0c0"/><rect x="171" y="16" width="1" height="1" fill="#c0c0c0"/><rect x="213" y="16" width="1" height="1" fill="#c0c0c0"/><rect x="254" y="16" width="1" height="1" fill="#c0c0c0"/><rect x="296" y="16" width="1" height="1" fill="#c0c0c0"/><rect x="338" y="16" width="1" height="1" fill="#c0c0c0"/><rect x="379" y="16" width="1" height="1" fill="#c0c0c0"/><rect x="420" y="16" width="1" height="1" fill="#c0c0c0"/><rect x="462" y="16" width="1" height="1" fill="#c0c0c0"/><rect x="503" y="16" width="1" height="1" fill="#c0c0c0"/><rect x="545" y="16" width="1" height="1" fill="#c0c0c0"/><rect x="586" y="16" width="1" height="1" fill="#c0c0c0"/><rect x="627" y="16" width="1" height="1" fill="#c0c0c0"/><rect x="669" y="16" width="1" height="1" fill="#c0c0c0"/><rect x="710" y="16" width="1" height="1" fill="#c0c0c0"/><rect x="752" y="16" width="1" height="1" fill="#c0c0c0"/><rect x="47" y="58" width="1" height="1" fill="#c0c0c0"/><rect x="89" y="58" width="1" height="1" fill="#c0c0c0"/><rect x="130" y="58" width="1" height="1" fill="#c0c0c0"/><rect x="213" y="58" width="1" height="1" fill="#c0c0c0"/><rect x="254" y="58" width="1" height="1" fill="#c0c0c0"/><rect x="296" y="58" width="1" height="1" fill="#c0c0c0"/><rect x="379" y="58" width="1" height="1" fill="#c0c0c0"/><rect x="420" y="58" width="1" height="1" fill="#c0c0c0"/><rect x="462" y="58" width="1" height="1" fill="#c0c0c0"/><rect x="545" y="58" width="1" height="1" fill="#c0c0c0"/><rect x="586" y="58" width="1" height="1" fill="#c0c0c0"/><rect x="627" y="58" width="1" height="1" fill="#c0c0c0"/><rect x="710" y="58" width="1" height="1" fill="#c0c0c0"/><rect x="752" y="58" width="1" height="1" fill="#c0c0c0"/><rect x="6" y="98" width="1" height="1" fill="#c0c0c0"/><rect x="47" y="98" width="1" height="1" fill="#c0c0c0"/><rect x="89" y="98" width="1" height="1" fill="#c0c0c0"/><rect x="130" y="98" width="1" height="1" fill="#c0c0c0"/><rect x="171" y="98" width="1" height="1" fill="#c0c0c0"/><rect x="213" y="98" width="1" height="1" fill="#c0c0c0"/><rect x="254" y="98" width="1" height="1" fill="#c0c0c0"/><rect x="296" y="98" width="1" height="1" fill="#c0c0c0"/><rect x="338" y="98" width="1" height="1" fill="#c0c0c0"/><rect x="379" y="98" width="1" height="1" fill="#c0c0c0"/><rect x="420" y="98" width="1" height="1" fill="#c0c0c0"/><rect x="462" y="98" width="1" height="1" fill="#c0c0c0"/><rect x="503" y="98" width="1" height="1" fill="#c0c0c0"/><rect x="545" y="98" width="1" height="1" fill="#c0c0c0"/><rect x="586" y="98" width="1" height="1" fill="#c0c0c0"/><rect x="627" y="98" width="1" height="1" fill="#c0c0c0"/><rect x="669" y="98" width="1" height="1" fill="#c0c0c0"/><rect x="710" y="98" width="1" height="1" fill="#c0c0c0"/><rect x="752" y="98" width="1" height="1" fill="#c0c0c0"/><rect x="6" y="139" width="1" height="1" fill="#c0c0c0"/><rect x="47" y="139" width="1" height="1" fill="#c0c0c0"/><rect x="89" y="139" width="1" height="1" fill="#c0c0c0"/><rect x="130" y="139" width="1" height="1" fill="#c0c0c0"/><rect x="171" y="139" width="1" height="1" fill="#c0c0c0"/><rect x="213" y="139" width="1" height="1" fill="#c0c0c0"/><rect x="254" y="139" width="1" height="1" fill="#c0c0c0"/><rect x="296" y="139" width="1" height="1" fill="#c0c0c0"/><rect x="338" y="139" width="1" height="1" fill="#c0c0c0"/><rect x="379" y="139" width="1" height="1" fill="#c0c0c0"/><rect x="420" y="139" width="1" height="1" fill="#c0c0c0"/><rect x="462" y="139" width="1" height="1" fill="#c0c0c0"/><rect x="503" y="139" width="1" height="1" fill="#c0c0c0"/><rect x="545" y="139" width="1" height="1" fill="#c0c0c0"/><rect x="586" y="139" width="1" height="1" fill="#c0c0c0"/><rect x="627" y="139" width="1" height="1" fill="#c0c0c0"/><rect x="669" y="139" width="1" height="1" fill="#c0c0c0"/><rect x="710" y="139" width="1" height="1" fill="#c0c0c0"/><rect x="752" y="139" width="1" height="1" fill="#c0c0c0"/><rect x="6" y="181" width="1" height="1" fill="#c0c0c0"/><rect x="47" y="181" width="1" height="1" fill="#c0c0c0"/><rect x="89" y="181" width="1" height="1" fill="#c0c0c0"/><rect x="130" y="181" width="1" height="1" fill="#c0c0c0"/><rect x="171" y="181" width="1" height="1" fill="#c0c0c0"/><rect x="213" y="181" width="1" height="1" fill="#c0c0c0"/><rect x="254" y="181" width="1" height="1" fill="#c0c0c0"/><rect x="296" y="181" width="1" height="1" fill="#c0c0c0"/><rect x="338" y="181" width="1" height="1" fill="#c0c0c0"/><rect x="379" y="181" width="1" height="1" fill="#c0c0c0"/><rect x="420" y="181" width="1" height="1" fill="#c0c0c0"/><rect x="462" y="181" width="1" height="1" fill="#c0c0c0"/><rect x="503" y="181" width="1" height="1" fill="#c0c0c0"/><rect x="545" y="181" width="1" height="1" fill="#c0c0c0"/><rect x="586" y="181" width="1" height="1" fill="#c0c0c0"/><rect x="627" y="181" width="1" height="1" fill="#c0c0c0"/><rect x="669" y="181" width="1" height="1" fill="#c0c0c0"/><rect x="710" y="181" width="1" height="1" fill="#c0c0c0"/><rect x="752" y="181" width="1" height="1" fill="#c0c0c0"/><rect x="47" y="221" width="1" height="1" fill="#c0c0c0"/><rect x="89" y="221" width="1" height="1" fill="#c0c0c0"/><rect x="130" y="221" width="1" height="1" fill="#c0c0c0"/><rect x="213" y="221" width="1" height="1" fill="#c0c0c0"/><rect x="254" y="221" width="1" height="1" fill="#c0c0c0"/><rect x="296" y="221" width="1" height="1" fill="#c0c0c0"/><rect x="379" y="221" width="1" height="1" fill="#c0c0c0"/><rect x="420" y="221" width="1" height="1" fill="#c0c0c0"/><rect x="462" y="221" width="1" height="1" fill="#c0c0c0"/><rect x="545" y="221" width="1" height="1" fill="#c0c0c0"/><rect x="586" y="221" width="1" height="1" fill="#c0c0c0"/><rect x="627" y="221" width="1" height="1" fill="#c0c0c0"/><rect x="710" y="221" width="1" height="1" fill="#c0c0c0"/><rect x="752" y="221" width="1" height="1" fill="#c0c0c0"/><rect x="6" y="262" width="1" height="1" fill="#c0c0c0"/><rect x="47" y="262" width="1" height="1" fill="#c0c0c0"/><rect x="89" y="262" width="1" height="1" fill="#c0c0c0"/><rect x="130" y="262" width="1" height="1" fill="#c0c0c0"/><rect x="171" y="262" width="1" height="1" fill="#c0c0c0"/><rect x="213" y="262" width="1" height="1" fill="#c0c0c0"/><rect x="254" y="262" width="1" height="1" fill="#c0c0c0"/><rect x="296" y="262" width="1" height="1" fill="#c0c0c0"/><rect x="338" y="262" width="1" height="1" fill="#c0c0c0"/><rect x="379" y="262" width="1" height="1" fill="#c0c0c0"/><rect x="420" y="262" width="1" height="1" fill="#c0c0c0"/><rect x="462" y="262" width="1" height="1" fill="#c0c0c0"/><rect x="503" y="262" width="1" height="1" fill="#c0c0c0"/><rect x="545" y="262" width="1" height="1" fill="#c0c0c0"/><rect x="586" y="262" width="1" height="1" fill="#c0c0c0"/><rect x="627" y="262" width="1" height="1" fill="#c0c0c0"/><rect x="669" y="262" width="1" height="1" fill="#c0c0c0"/><rect x="710" y="262" width="1" height="1" fill="#c0c0c0"/><rect x="752" y="262" width="1" height="1" fill="#c0c0c0"/><rect x="6" y="304" width="1" height="1" fill="#c0c0c0"/><rect x="47" y="304" width="1" height="1" fill="#c0c0c0"/><rect x="89" y="304" width="1" height="1" fill="#c0c0c0"/><rect x="130" y="304" width="1" height="1" fill="#c0c0c0"/><rect x="171" y="304" width="1" height="1" fill="#c0c0c0"/><rect x="213" y="304" width="1" height="1" fill="#c0c0c0"/><rect x="254" y="304" width="1" height="1" fill="#c0c0c0"/><rect x="296" y="304" width="1" height="1" fill="#c0c0c0"/><rect x="338" y="304" width="1" height="1" fill="#c0c0c0"/><rect x="379" y="304" width="1" height="1" fill="#c0c0c0"/><rect x="420" y="304" width="1" height="1" fill="#c0c0c0"/><rect x="462" y="304" width="1" height="1" fill="#c0c0c0"/><rect x="503" y="304" width="1" height="1" fill="#c0c0c0"/><rect x="545" y="304" width="1" height="1" fill="#c0c0c0"/><rect x="586" y="304" width="1" height="1" fill="#c0c0c0"/><rect x="627" y="304" width="1" height="1" fill="#c0c0c0"/><rect x="669" y="304" width="1" height="1" fill="#c0c0c0"/><rect x="710" y="304" width="1" height="1" fill="#c0c0c0"/><rect x="752" y="304" width="1" height="1" fill="#c0c0c0"/><rect x="6" y="344" width="1" height="1" fill="#c0c0c0"/><rect x="47" y="344" width="1" height="1" fill="#c0c0c0"/><rect x="89" y="344" width="1" height="1" fill="#c0c0c0"/><rect x="130" y="344" width="1" height="1" fill="#c0c0c0"/><rect x="171" y="344" width="1" height="1" fill="#c0c0c0"/><rect x="213" y="344" width="1" height="1" fill="#c0c0c0"/><rect x="254" y="344" width="1" height="1" fill="#c0c0c0"/><rect x="296" y="344" width="1" height="1" fill="#c0c0c0"/><rect x="338" y="344" width="1" height="1" fill="#c0c0c0"/><rect x="379" y="344" width="1" height="1" fill="#c0c0c0"/><rect x="420" y="344" width="1" height="1" fill="#c0c0c0"/><rect x="462" y="344" width="1" height="1" fill="#c0c0c0"/><rect x="503" y="344" width="1" height="1" fill="#c0c0c0"/><rect x="545" y="344" width="1" height="1" fill="#c0c0c0"/><rect x="586" y="344" width="1" height="1" fill="#c0c0c0"/><rect x="627" y="344" width="1" height="1" fill="#c0c0c0"/><rect x="669" y="344" width="1" height="1" fill="#c0c0c0"/><rect x="710" y="344" width="1" height="1" fill="#c0c0c0"/><rect x="752" y="344" width="1" height="1" fill="#c0c0c0"/><rect x="47" y="385" width="1" height="1" fill="#c0c0c0"/><rect x="89" y="385" width="1" height="1" fill="#c0c0c0"/><rect x="130" y="385" width="1" height="1" fill="#c0c0c0"/><rect x="213" y="385" width="1" height="1" fill="#c0c0c0"/><rect x="254" y="385" width="1" height="1" fill="#c0c0c0"/><rect x="296" y="385" width="1" height="1" fill="#c0c0c0"/><rect x="379" y="385" width="1" height="1" fill="#c0c0c0"/><rect x="420" y="385" width="1" height="1" fill="#c0c0c0"/><rect x="462" y="385" width="1" height="1" fill="#c0c0c0"/><rect x="545" y="385" width="1" height="1" fill="#c0c0c0"/><rect x="586" y="385" width="1" height="1" fill="#c0c0c0"/><rect x="627" y="385" width="1" height="1" fill="#c0c0c0"/><rect x="710" y="385" width="1" height="1" fill="#c0c0c0"/><rect x="752" y="385" width="1" height="1" fill="#c0c0c0"/><rect x="6" y="426" width="1" height="1" fill="#c0c0c0"/><rect x="47" y="426" width="1" height="1" fill="#c0c0c0"/><rect x="89" y="426" width="1" height="1" fill="#c0c0c0"/><rect x="130" y="426" width="1" height="1" fill="#c0c0c0"/><rect x="171" y="426" width="1" height="1" fill="#c0c0c0"/><rect x="213" y="426" width="1" height="1" fill="#c0c0c0"/><rect x="254" y="426" width="1" height="1" fill="#c0c0c0"/><rect x="296" y="426" width="1" height="1" fill="#c0c0c0"/><rect x="338" y="426" width="1" height="1" fill="#c0c0c0"/><rect x="379" y="426" width="1" height="1" fill="#c0c0c0"/><rect x="420" y="426" width="1" height="1" fill="#c0c0c0"/><rect x="462" y="426" width="1" height="1" fill="#c0c0c0"/><rect x="503" y="426" width="1" height="1" fill="#c0c0c0"/><rect x="545" y="426" width="1" height="1" fill="#c0c0c0"/><rect x="586" y="426" width="1" height="1" fill="#c0c0c0"/><rect x="627" y="426" width="1" height="1" fill="#c0c0c0"/><rect x="669" y="426" width="1" height="1" fill="#c0c0c0"/><rect x="710" y="426" width="1" height="1" fill="#c0c0c0"/><rect x="752" y="426" width="1" height="1" fill="#c0c0c0"/><rect x="6" y="467" width="1" height="1" fill="#c0c0c0"/><rect x="47" y="467" width="1" height="1" fill="#c0c0c0"/><rect x="89" y="467" width="1" height="1" fill="#c0c0c0"/><rect x="130" y="467" width="1" height="1" fill="#c0c0c0"/><rect x="171" y="467" width="1" height="1" fill="#c0c0c0"/><rect x="213" y="467" width="1" height="1" fill="#c0c0c0"/><rect x="254" y="467" width="1" height="1" fill="#c0c0c0"/><rect x="296" y="467" width="1" height="1" fill="#c0c0c0"/><rect x="338" y="467" width="1" height="1" fill="#c0c0c0"/><rect x="379" y="467" width="1" height="1" fill="#c0c0c0"/><rect x="420" y="467" width="1" height="1" fill="#c0c0c0"/><rect x="462" y="467" width="1" height="1" fill="#c0c0c0"/><rect x="503" y="467" width="1" height="1" fill="#c0c0c0"/><rect x="545" y="467" width="1" height="1" fill="#c0c0c0"/><rect x="586" y="467" width="1" height="1" fill="#c0c0c0"/><rect x="627" y="467" width="1" height="1" fill="#c0c0c0"/><rect x="669" y="467" width="1" height="1" fill="#c0c0c0"/><rect x="710" y="467" width="1" height="1" fill="#c0c0c0"/><rect x="752" y="467" width="1" height="1" fill="#c0c0c0"/><rect x="6" y="509" width="1" height="1" fill="#c0c0c0"/><rect x="47" y="509" width="1" height="1" fill="#c0c0c0"/><rect x="89" y="509" width="1" height="1" fill="#c0c0c0"/><rect x="130" y="509" width="1" height="1" fill="#c0c0c0"/><rect x="171" y="509" width="1" height="1" fill="#c0c0c0"/><rect x="213" y="509" width="1" height="1" fill="#c0c0c0"/><rect x="254" y="509" width="1" height="1" fill="#c0c0c0"/><rect x="296" y="509" width="1" height="1" fill="#c0c0c0"/><rect x="338" y="509" width="1" height="1" fill="#c0c0c0"/><rect x="379" y="509" width="1" height="1" fill="#c0c0c0"/><rect x="420" y="509" width="1" height="1" fill="#c0c0c0"/><rect x="462" y="509" width="1" height="1" fill="#c0c0c0"/><rect x="503" y="509" width="1" height="1" fill="#c0c0c0"/><rect x="545" y="509" width="1" height="1" fill="#c0c0c0"/><rect x="586" y="509" width="1" height="1" fill="#c0c0c0"/><rect x="627" y="509" width="1" height="1" fill="#c0c0c0"/><rect x="669" y="509" width="1" height="1" fill="#c0c0c0"/><rect x="710" y="509" width="1" height="1" fill="#c0c0c0"/><rect x="752" y="509" width="1" height="1" fill="#c0c0c0"/><rect x="3" y="58" width="7" height="1" fill="#ffff20"/><rect x="6" y="55" width="1" height="7" fill="#ffff20"/><rect x="666" y="58" width="7" height="1" fill="#ffff20"/><rect x="669" y="55" width="1" height="7" fill="#ffff20"/><rect x="168" y="58" width="7" height="1" fill="#ffff20"/><rect x="171" y="55" width="1" height="7" fill="#ffff20"/><rect x="335" y="58" width="7" height="1" fill="#ffff20"/><rect x="338" y="55" width="1" height="7" fill="#ffff20"/><rect x="500" y="58" width="7" height="1" fill="#ffff20"/><rect x="503" y="55" width="1" height="7" fill="#ffff20"/><rect x="3" y="221" width="7" height="1" fill="#ffff20"/><rect x="6" y="218" width="1" height="7" fill="#ffff20"/><rect x="666" y="221" width="7" height="1" fill="#ffff20"/><rect x="669" y="218" width="1" height="7" fill="#ffff20"/><rect x="168" y="221" width="7" height="1" fill="#ffff20"/><rect x="171" y="218" width="1" height="7" fill="#ffff20"/><rect x="335" y="221" width="7" height="1" fill="#ffff20"/><rect x="338" y="218" width="1" height="7" fill="#ffff20"/><rect x="500" y="221" width="7" height="1" fill="#ffff20"/><rect x="503" y="218" width="1" height="7" fill="#ffff20"/><rect x="666" y="385" width="7" height="1" fill="#ffff20"/><rect x="669" y="382" width="1" height="7" fill="#ffff20"/><rect x="168" y="385" width="7" height="1" fill="#ffff20"/><rect x="171" y="382" width="1" height="7" fill="#ffff20"/><rect x="335" y="385" width="7" height="1" fill="#ffff20"/><rect x="338" y="382" width="1" height="7" fill="#ffff20"/><rect x="500" y="385" width="7" height="1" fill="#ffff20"/><rect x="503" y="382" width="1" height="7" fill="#ffff20"/></svg>
<svg style="position:absolute;left:120px;top:482px;" width="15" height="15" viewBox="0 0 15 15"><circle cx="7.5" cy="7.5" r="6" fill="none" stroke="#ffff20" stroke-width="1.2"/><rect x="6" y="6" width="3" height="3" fill="#ffff20"/></svg>
<svg style="position:absolute;left:3px;top:108px;" width="114" height="2" viewBox="0 0 114 2" shape-rendering="crispEdges"><rect x="1" y="0" width="1" height="1" fill="#b0b0b0"/><rect x="0" y="1" width="2" height="1" fill="#c4c4c4"/><rect x="5" y="0" width="1" height="1" fill="#b0b0b0"/><rect x="4" y="1" width="2" height="1" fill="#c4c4c4"/><rect x="9" y="0" width="1" height="1" fill="#b0b0b0"/><rect x="8" y="1" width="2" height="1" fill="#c4c4c4"/><rect x="13" y="0" width="1" height="1" fill="#b0b0b0"/><rect x="12" y="1" width="2" height="1" fill="#c4c4c4"/><rect x="17" y="0" width="1" height="1" fill="#b0b0b0"/><rect x="16" y="1" width="2" height="1" fill="#c4c4c4"/><rect x="21" y="0" width="1" height="1" fill="#b0b0b0"/><rect x="20" y="1" width="2" height="1" fill="#c4c4c4"/><rect x="25" y="0" width="1" height="1" fill="#b0b0b0"/><rect x="24" y="1" width="2" height="1" fill="#c4c4c4"/><rect x="29" y="0" width="1" height="1" fill="#b0b0b0"/><rect x="28" y="1" width="2" height="1" fill="#c4c4c4"/><rect x="33" y="0" width="1" height="1" fill="#b0b0b0"/><rect x="32" y="1" width="2" height="1" fill="#c4c4c4"/><rect x="37" y="0" width="1" height="1" fill="#b0b0b0"/><rect x="36" y="1" width="2" height="1" fill="#c4c4c4"/><rect x="41" y="0" width="1" height="1" fill="#b0b0b0"/><rect x="40" y="1" width="2" height="1" fill="#c4c4c4"/><rect x="45" y="0" width="1" height="1" fill="#b0b0b0"/><rect x="44" y="1" width="2" height="1" fill="#c4c4c4"/><rect x="49" y="0" width="1" height="1" fill="#b0b0b0"/><rect x="48" y="1" width="2" height="1" fill="#c4c4c4"/><rect x="53" y="0" width="1" height="1" fill="#b0b0b0"/><rect x="52" y="1" width="2" height="1" fill="#c4c4c4"/><rect x="57" y="0" width="1" height="1" fill="#b0b0b0"/><rect x="56" y="1" width="2" height="1" fill="#c4c4c4"/><rect x="61" y="0" width="1" height="1" fill="#b0b0b0"/><rect x="60" y="1" width="2" height="1" fill="#c4c4c4"/><rect x="65" y="0" width="1" height="1" fill="#b0b0b0"/><rect x="64" y="1" width="2" height="1" fill="#c4c4c4"/><rect x="69" y="0" width="1" height="1" fill="#b0b0b0"/><rect x="68" y="1" width="2" height="1" fill="#c4c4c4"/><rect x="73" y="0" width="1" height="1" fill="#b0b0b0"/><rect x="72" y="1" width="2" height="1" fill="#c4c4c4"/><rect x="77" y="0" width="1" height="1" fill="#b0b0b0"/><rect x="76" y="1" width="2" height="1" fill="#c4c4c4"/><rect x="81" y="0" width="1" height="1" fill="#b0b0b0"/><rect x="80" y="1" width="2" height="1" fill="#c4c4c4"/><rect x="85" y="0" width="1" height="1" fill="#b0b0b0"/><rect x="84" y="1" width="2" height="1" fill="#c4c4c4"/><rect x="89" y="0" width="1" height="1" fill="#b0b0b0"/><rect x="88" y="1" width="2" height="1" fill="#c4c4c4"/><rect x="93" y="0" width="1" height="1" fill="#b0b0b0"/><rect x="92" y="1" width="2" height="1" fill="#c4c4c4"/><rect x="97" y="0" width="1" height="1" fill="#b0b0b0"/><rect x="96" y="1" width="2" height="1" fill="#c4c4c4"/><rect x="101" y="0" width="1" height="1" fill="#b0b0b0"/><rect x="100" y="1" width="2" height="1" fill="#c4c4c4"/><rect x="105" y="0" width="1" height="1" fill="#b0b0b0"/><rect x="104" y="1" width="2" height="1" fill="#c4c4c4"/><rect x="109" y="0" width="1" height="1" fill="#b0b0b0"/><rect x="108" y="1" width="2" height="1" fill="#c4c4c4"/><rect x="113" y="0" width="1" height="1" fill="#b0b0b0"/><rect x="112" y="1" width="2" height="1" fill="#c4c4c4"/></svg>
<div style="position:absolute;left:49px;top:113px;font-size:12px;line-height:15px;color:#000;font-weight:bold;white-space:pre;letter-spacing:-0.3px">Mask</div>
<div style="position:absolute;left:5px;top:130px;font-size:12px;line-height:15px;color:#959595;font-weight:normal;white-space:pre;letter-spacing:-0.6px">F1</div>
<div style="position:absolute;left:26px;top:130px;font-size:12px;line-height:15px;color:#98104a;font-weight:normal;white-space:pre;letter-spacing:0px">Entity</div>
<div style="position:absolute;left:5px;top:147px;font-size:12px;line-height:15px;color:#959595;font-weight:normal;white-space:pre;letter-spacing:-0.6px">F2</div>
<div style="position:absolute;left:26px;top:147px;font-size:12px;line-height:15px;color:#98104a;font-weight:normal;white-space:pre;letter-spacing:0px">Color</div>
<div style="position:absolute;left:5px;top:164px;font-size:12px;line-height:15px;color:#959595;font-weight:normal;white-space:pre;letter-spacing:-0.6px">F3</div>
<div style="position:absolute;left:26px;top:164px;font-size:12px;line-height:15px;color:#98104a;font-weight:normal;white-space:pre;letter-spacing:0px">Line Type</div>
<div style="position:absolute;left:5px;top:181px;font-size:12px;line-height:15px;color:#959595;font-weight:normal;white-space:pre;letter-spacing:-0.6px">F4</div>
<div style="position:absolute;left:26px;top:181px;font-size:12px;line-height:15px;color:#98104a;font-weight:normal;white-space:pre;letter-spacing:0px">Weight</div>
<div style="position:absolute;left:5px;top:215px;font-size:12px;line-height:15px;color:#959595;font-weight:normal;white-space:pre;letter-spacing:-0.6px">F6</div>
<div style="position:absolute;left:26px;top:215px;font-size:12px;line-height:15px;color:#98104a;font-weight:normal;white-space:pre;letter-spacing:0px">Pattern</div>
<div style="position:absolute;left:5px;top:453px;font-size:12px;line-height:15px;color:#959595;font-weight:normal;white-space:pre;letter-spacing:-0.6px">S0</div>
<div style="position:absolute;left:26px;top:453px;font-size:12px;line-height:15px;color:#1a1030;font-weight:normal;white-space:pre;letter-spacing:-0.2px">Exit</div>
<div style="position:absolute;left:120px;top:104px;width:1px;height:521px;background:#fafafa"></div>
<div style="position:absolute;left:1px;top:472px;width:119px;height:1px;background:#b4b4b4"></div>
<svg style="position:absolute;left:3px;top:480px;" width="104" height="2" viewBox="0 0 104 2" shape-rendering="crispEdges"><rect x="1" y="0" width="1" height="1" fill="#b0b0b0"/><rect x="0" y="1" width="2" height="1" fill="#c4c4c4"/><rect x="5" y="0" width="1" height="1" fill="#b0b0b0"/><rect x="4" y="1" width="2" height="1" fill="#c4c4c4"/><rect x="9" y="0" width="1" height="1" fill="#b0b0b0"/><rect x="8" y="1" width="2" height="1" fill="#c4c4c4"/><rect x="13" y="0" width="1" height="1" fill="#b0b0b0"/><rect x="12" y="1" width="2" height="1" fill="#c4c4c4"/><rect x="17" y="0" width="1" height="1" fill="#b0b0b0"/><rect x="16" y="1" width="2" height="1" fill="#c4c4c4"/><rect x="21" y="0" width="1" height="1" fill="#b0b0b0"/><rect x="20" y="1" width="2" height="1" fill="#c4c4c4"/><rect x="25" y="0" width="1" height="1" fill="#b0b0b0"/><rect x="24" y="1" width="2" height="1" fill="#c4c4c4"/><rect x="29" y="0" width="1" height="1" fill="#b0b0b0"/><rect x="28" y="1" width="2" height="1" fill="#c4c4c4"/><rect x="33" y="0" width="1" height="1" fill="#b0b0b0"/><rect x="32" y="1" width="2" height="1" fill="#c4c4c4"/><rect x="37" y="0" width="1" height="1" fill="#b0b0b0"/><rect x="36" y="1" width="2" height="1" fill="#c4c4c4"/><rect x="41" y="0" width="1" height="1" fill="#b0b0b0"/><rect x="40" y="1" width="2" height="1" fill="#c4c4c4"/><rect x="45" y="0" width="1" height="1" fill="#b0b0b0"/><rect x="44" y="1" width="2" height="1" fill="#c4c4c4"/><rect x="49" y="0" width="1" height="1" fill="#b0b0b0"/><rect x="48" y="1" width="2" height="1" fill="#c4c4c4"/><rect x="53" y="0" width="1" height="1" fill="#b0b0b0"/><rect x="52" y="1" width="2" height="1" fill="#c4c4c4"/><rect x="57" y="0" width="1" height="1" fill="#b0b0b0"/><rect x="56" y="1" width="2" height="1" fill="#c4c4c4"/><rect x="61" y="0" width="1" height="1" fill="#b0b0b0"/><rect x="60" y="1" width="2" height="1" fill="#c4c4c4"/><rect x="65" y="0" width="1" height="1" fill="#b0b0b0"/><rect x="64" y="1" width="2" height="1" fill="#c4c4c4"/><rect x="69" y="0" width="1" height="1" fill="#b0b0b0"/><rect x="68" y="1" width="2" height="1" fill="#c4c4c4"/><rect x="73" y="0" width="1" height="1" fill="#b0b0b0"/><rect x="72" y="1" width="2" height="1" fill="#c4c4c4"/><rect x="77" y="0" width="1" height="1" fill="#b0b0b0"/><rect x="76" y="1" width="2" height="1" fill="#c4c4c4"/><rect x="81" y="0" width="1" height="1" fill="#b0b0b0"/><rect x="80" y="1" width="2" height="1" fill="#c4c4c4"/><rect x="85" y="0" width="1" height="1" fill="#b0b0b0"/><rect x="84" y="1" width="2" height="1" fill="#c4c4c4"/><rect x="89" y="0" width="1" height="1" fill="#b0b0b0"/><rect x="88" y="1" width="2" height="1" fill="#c4c4c4"/><rect x="93" y="0" width="1" height="1" fill="#b0b0b0"/><rect x="92" y="1" width="2" height="1" fill="#c4c4c4"/><rect x="97" y="0" width="1" height="1" fill="#b0b0b0"/><rect x="96" y="1" width="2" height="1" fill="#c4c4c4"/><rect x="101" y="0" width="1" height="1" fill="#b0b0b0"/><rect x="100" y="1" width="2" height="1" fill="#c4c4c4"/></svg>
<svg style="position:absolute;left:110px;top:478px;" width="6" height="5" viewBox="0 0 6 5" shape-rendering="crispEdges"><rect x="0" y="0" width="1" height="1" fill="#000"/><rect x="1" y="0" width="1" height="1" fill="#000"/><rect x="4" y="0" width="1" height="1" fill="#000"/><rect x="5" y="0" width="1" height="1" fill="#000"/><rect x="1" y="1" width="1" height="1" fill="#000"/><rect x="2" y="1" width="1" height="1" fill="#000"/><rect x="3" y="1" width="1" height="1" fill="#000"/><rect x="4" y="1" width="1" height="1" fill="#000"/><rect x="2" y="2" width="1" height="1" fill="#000"/><rect x="3" y="2" width="1" height="1" fill="#000"/><rect x="1" y="3" width="1" height="1" fill="#000"/><rect x="2" y="3" width="1" height="1" fill="#000"/><rect x="3" y="3" width="1" height="1" fill="#000"/><rect x="4" y="3" width="1" height="1" fill="#000"/><rect x="0" y="4" width="1" height="1" fill="#000"/><rect x="1" y="4" width="1" height="1" fill="#000"/><rect x="4" y="4" width="1" height="1" fill="#000"/><rect x="5" y="4" width="1" height="1" fill="#000"/></svg>
<div style="position:absolute;left:1px;top:540px;width:119px;height:1px;background:#b4b4b4"></div>
<svg style="position:absolute;left:3px;top:549px;" width="104" height="2" viewBox="0 0 104 2" shape-rendering="crispEdges"><rect x="1" y="0" width="1" height="1" fill="#b0b0b0"/><rect x="0" y="1" width="2" height="1" fill="#c4c4c4"/><rect x="5" y="0" width="1" height="1" fill="#b0b0b0"/><rect x="4" y="1" width="2" height="1" fill="#c4c4c4"/><rect x="9" y="0" width="1" height="1" fill="#b0b0b0"/><rect x="8" y="1" width="2" height="1" fill="#c4c4c4"/><rect x="13" y="0" width="1" height="1" fill="#b0b0b0"/><rect x="12" y="1" width="2" height="1" fill="#c4c4c4"/><rect x="17" y="0" width="1" height="1" fill="#b0b0b0"/><rect x="16" y="1" width="2" height="1" fill="#c4c4c4"/><rect x="21" y="0" width="1" height="1" fill="#b0b0b0"/><rect x="20" y="1" width="2" height="1" fill="#c4c4c4"/><rect x="25" y="0" width="1" height="1" fill="#b0b0b0"/><rect x="24" y="1" width="2" height="1" fill="#c4c4c4"/><rect x="29" y="0" width="1" height="1" fill="#b0b0b0"/><rect x="28" y="1" width="2" height="1" fill="#c4c4c4"/><rect x="33" y="0" width="1" height="1" fill="#b0b0b0"/><rect x="32" y="1" width="2" height="1" fill="#c4c4c4"/><rect x="37" y="0" width="1" height="1" fill="#b0b0b0"/><rect x="36" y="1" width="2" height="1" fill="#c4c4c4"/><rect x="41" y="0" width="1" height="1" fill="#b0b0b0"/><rect x="40" y="1" width="2" height="1" fill="#c4c4c4"/><rect x="45" y="0" width="1" height="1" fill="#b0b0b0"/><rect x="44" y="1" width="2" height="1" fill="#c4c4c4"/><rect x="49" y="0" width="1" height="1" fill="#b0b0b0"/><rect x="48" y="1" width="2" height="1" fill="#c4c4c4"/><rect x="53" y="0" width="1" height="1" fill="#b0b0b0"/><rect x="52" y="1" width="2" height="1" fill="#c4c4c4"/><rect x="57" y="0" width="1" height="1" fill="#b0b0b0"/><rect x="56" y="1" width="2" height="1" fill="#c4c4c4"/><rect x="61" y="0" width="1" height="1" fill="#b0b0b0"/><rect x="60" y="1" width="2" height="1" fill="#c4c4c4"/><rect x="65" y="0" width="1" height="1" fill="#b0b0b0"/><rect x="64" y="1" width="2" height="1" fill="#c4c4c4"/><rect x="69" y="0" width="1" height="1" fill="#b0b0b0"/><rect x="68" y="1" width="2" height="1" fill="#c4c4c4"/><rect x="73" y="0" width="1" height="1" fill="#b0b0b0"/><rect x="72" y="1" width="2" height="1" fill="#c4c4c4"/><rect x="77" y="0" width="1" height="1" fill="#b0b0b0"/><rect x="76" y="1" width="2" height="1" fill="#c4c4c4"/><rect x="81" y="0" width="1" height="1" fill="#b0b0b0"/><rect x="80" y="1" width="2" height="1" fill="#c4c4c4"/><rect x="85" y="0" width="1" height="1" fill="#b0b0b0"/><rect x="84" y="1" width="2" height="1" fill="#c4c4c4"/><rect x="89" y="0" width="1" height="1" fill="#b0b0b0"/><rect x="88" y="1" width="2" height="1" fill="#c4c4c4"/><rect x="93" y="0" width="1" height="1" fill="#b0b0b0"/><rect x="92" y="1" width="2" height="1" fill="#c4c4c4"/><rect x="97" y="0" width="1" height="1" fill="#b0b0b0"/><rect x="96" y="1" width="2" height="1" fill="#c4c4c4"/><rect x="101" y="0" width="1" height="1" fill="#b0b0b0"/><rect x="100" y="1" width="2" height="1" fill="#c4c4c4"/></svg>
<svg style="position:absolute;left:110px;top:546px;" width="6" height="5" viewBox="0 0 6 5" shape-rendering="crispEdges"><rect x="0" y="0" width="1" height="1" fill="#000"/><rect x="1" y="0" width="1" height="1" fill="#000"/><rect x="4" y="0" width="1" height="1" fill="#000"/><rect x="5" y="0" width="1" height="1" fill="#000"/><rect x="1" y="1" width="1" height="1" fill="#000"/><rect x="2" y="1" width="1" height="1" fill="#000"/><rect x="3" y="1" width="1" height="1" fill="#000"/><rect x="4" y="1" width="1" height="1" fill="#000"/><rect x="2" y="2" width="1" height="1" fill="#000"/><rect x="3" y="2" width="1" height="1" fill="#000"/><rect x="1" y="3" width="1" height="1" fill="#000"/><rect x="2" y="3" width="1" height="1" fill="#000"/><rect x="3" y="3" width="1" height="1" fill="#000"/><rect x="4" y="3" width="1" height="1" fill="#000"/><rect x="0" y="4" width="1" height="1" fill="#000"/><rect x="1" y="4" width="1" height="1" fill="#000"/><rect x="4" y="4" width="1" height="1" fill="#000"/><rect x="5" y="4" width="1" height="1" fill="#000"/></svg>
<div style="position:absolute;left:1px;top:624px;width:120px;height:1px;background:#b4b4b4"></div>
<div style="position:absolute;left:885px;top:104px;width:3px;height:521px;background:#fbfbfb"></div>
<svg style="position:absolute;left:888px;top:111px;" width="146" height="2" viewBox="0 0 146 2" shape-rendering="crispEdges"><rect x="1" y="0" width="1" height="1" fill="#b0b0b0"/><rect x="0" y="1" width="2" height="1" fill="#c4c4c4"/><rect x="5" y="0" width="1" height="1" fill="#b0b0b0"/><rect x="4" y="1" width="2" height="1" fill="#c4c4c4"/><rect x="9" y="0" width="1" height="1" fill="#b0b0b0"/><rect x="8" y="1" width="2" height="1" fill="#c4c4c4"/><rect x="13" y="0" width="1" height="1" fill="#b0b0b0"/><rect x="12" y="1" width="2" height="1" fill="#c4c4c4"/><rect x="17" y="0" width="1" height="1" fill="#b0b0b0"/><rect x="16" y="1" width="2" height="1" fill="#c4c4c4"/><rect x="21" y="0" width="1" height="1" fill="#b0b0b0"/><rect x="20" y="1" width="2" height="1" fill="#c4c4c4"/><rect x="25" y="0" width="1" height="1" fill="#b0b0b0"/><rect x="24" y="1" width="2" height="1" fill="#c4c4c4"/><rect x="29" y="0" width="1" height="1" fill="#b0b0b0"/><rect x="28" y="1" width="2" height="1" fill="#c4c4c4"/><rect x="33" y="0" width="1" height="1" fill="#b0b0b0"/><rect x="32" y="1" width="2" height="1" fill="#c4c4c4"/><rect x="37" y="0" width="1" height="1" fill="#b0b0b0"/><rect x="36" y="1" width="2" height="1" fill="#c4c4c4"/><rect x="41" y="0" width="1" height="1" fill="#b0b0b0"/><rect x="40" y="1" width="2" height="1" fill="#c4c4c4"/><rect x="45" y="0" width="1" height="1" fill="#b0b0b0"/><rect x="44" y="1" width="2" height="1" fill="#c4c4c4"/><rect x="49" y="0" width="1" height="1" fill="#b0b0b0"/><rect x="48" y="1" width="2" height="1" fill="#c4c4c4"/><rect x="53" y="0" width="1" height="1" fill="#b0b0b0"/><rect x="52" y="1" width="2" height="1" fill="#c4c4c4"/><rect x="57" y="0" width="1" height="1" fill="#b0b0b0"/><rect x="56" y="1" width="2" height="1" fill="#c4c4c4"/><rect x="61" y="0" width="1" height="1" fill="#b0b0b0"/><rect x="60" y="1" width="2" height="1" fill="#c4c4c4"/><rect x="65" y="0" width="1" height="1" fill="#b0b0b0"/><rect x="64" y="1" width="2" height="1" fill="#c4c4c4"/><rect x="69" y="0" width="1" height="1" fill="#b0b0b0"/><rect x="68" y="1" width="2" height="1" fill="#c4c4c4"/><rect x="73" y="0" width="1" height="1" fill="#b0b0b0"/><rect x="72" y="1" width="2" height="1" fill="#c4c4c4"/><rect x="77" y="0" width="1" height="1" fill="#b0b0b0"/><rect x="76" y="1" width="2" height="1" fill="#c4c4c4"/><rect x="81" y="0" width="1" height="1" fill="#b0b0b0"/><rect x="80" y="1" width="2" height="1" fill="#c4c4c4"/><rect x="85" y="0" width="1" height="1" fill="#b0b0b0"/><rect x="84" y="1" width="2" height="1" fill="#c4c4c4"/><rect x="89" y="0" width="1" height="1" fill="#b0b0b0"/><rect x="88" y="1" width="2" height="1" fill="#c4c4c4"/><rect x="93" y="0" width="1" height="1" fill="#b0b0b0"/><rect x="92" y="1" width="2" height="1" fill="#c4c4c4"/><rect x="97" y="0" width="1" height="1" fill="#b0b0b0"/><rect x="96" y="1" width="2" height="1" fill="#c4c4c4"/><rect x="101" y="0" width="1" height="1" fill="#b0b0b0"/><rect x="100" y="1" width="2" height="1" fill="#c4c4c4"/><rect x="105" y="0" width="1" height="1" fill="#b0b0b0"/><rect x="104" y="1" width="2" height="1" fill="#c4c4c4"/><rect x="109" y="0" width="1" height="1" fill="#b0b0b0"/><rect x="108" y="1" width="2" height="1" fill="#c4c4c4"/><rect x="113" y="0" width="1" height="1" fill="#b0b0b0"/><rect x="112" y="1" width="2" height="1" fill="#c4c4c4"/><rect x="117" y="0" width="1" height="1" fill="#b0b0b0"/><rect x="116" y="1" width="2" height="1" fill="#c4c4c4"/><rect x="121" y="0" width="1" height="1" fill="#b0b0b0"/><rect x="120" y="1" width="2" height="1" fill="#c4c4c4"/><rect x="125" y="0" width="1" height="1" fill="#b0b0b0"/><rect x="124" y="1" width="2" height="1" fill="#c4c4c4"/><rect x="129" y="0" width="1" height="1" fill="#b0b0b0"/><rect x="128" y="1" width="2" height="1" fill="#c4c4c4"/><rect x="133" y="0" width="1" height="1" fill="#b0b0b0"/><rect x="132" y="1" width="2" height="1" fill="#c4c4c4"/><rect x="137" y="0" width="1" height="1" fill="#b0b0b0"/><rect x="136" y="1" width="2" height="1" fill="#c4c4c4"/><rect x="141" y="0" width="1" height="1" fill="#b0b0b0"/><rect x="140" y="1" width="2" height="1" fill="#c4c4c4"/><rect x="145" y="0" width="1" height="1" fill="#b0b0b0"/><rect x="144" y="1" width="2" height="1" fill="#c4c4c4"/></svg>
<svg style="position:absolute;left:1037px;top:109px;" width="6" height="5" viewBox="0 0 6 5" shape-rendering="crispEdges"><rect x="0" y="0" width="1" height="1" fill="#000"/><rect x="1" y="0" width="1" height="1" fill="#000"/><rect x="4" y="0" width="1" height="1" fill="#000"/><rect x="5" y="0" width="1" height="1" fill="#000"/><rect x="1" y="1" width="1" height="1" fill="#000"/><rect x="2" y="1" width="1" height="1" fill="#000"/><rect x="3" y="1" width="1" height="1" fill="#000"/><rect x="4" y="1" width="1" height="1" fill="#000"/><rect x="2" y="2" width="1" height="1" fill="#000"/><rect x="3" y="2" width="1" height="1" fill="#000"/><rect x="1" y="3" width="1" height="1" fill="#000"/><rect x="2" y="3" width="1" height="1" fill="#000"/><rect x="3" y="3" width="1" height="1" fill="#000"/><rect x="4" y="3" width="1" height="1" fill="#000"/><rect x="0" y="4" width="1" height="1" fill="#000"/><rect x="1" y="4" width="1" height="1" fill="#000"/><rect x="4" y="4" width="1" height="1" fill="#000"/><rect x="5" y="4" width="1" height="1" fill="#000"/></svg>
<div style="position:absolute;left:937px;top:124px;width:18px;height:19px;background:#fff"></div>
<div style="position:absolute;left:939px;top:126px;width:15px;height:17px;overflow:hidden;font-size:12px;line-height:15px;color:#3a0f5a;white-space:pre;letter-spacing:0px">1</div>
<div style="position:absolute;left:955px;top:125px;width:13px;height:17px;background:#e5e5e5;border:1px solid #acacac;box-sizing:border-box"></div>
<svg style="position:absolute;left:957px;top:130px;" width="9" height="6" viewBox="0 0 9 6"><path d="M1 1.5 L4.5 5 L8 1.5" stroke="#555" stroke-width="1.1" fill="none"/></svg>
<div style="position:absolute;left:972px;top:124px;width:18px;height:19px;background:#fff"></div>
<div style="position:absolute;left:974px;top:126px;width:15px;height:17px;overflow:hidden;font-size:12px;line-height:15px;color:#3a2000;white-space:pre;letter-spacing:0px">9</div>
<div style="position:absolute;left:990px;top:125px;width:13px;height:17px;background:#e5e5e5;border:1px solid #acacac;box-sizing:border-box"></div>
<svg style="position:absolute;left:992px;top:130px;" width="9" height="6" viewBox="0 0 9 6"><path d="M1 1.5 L4.5 5 L8 1.5" stroke="#555" stroke-width="1.1" fill="none"/></svg>
<div style="position:absolute;left:888px;top:148px;width:142px;height:475px;background:#000"></div>
<div style="position:absolute;left:888px;top:200px;width:142px;height:1px;background:#f4f4f4"></div>
<div style="position:absolute;left:888px;top:253px;width:142px;height:1px;background:#f4f4f4"></div>
<div style="position:absolute;left:888px;top:306px;width:142px;height:1px;background:#f4f4f4"></div>
<div style="position:absolute;left:888px;top:359px;width:142px;height:1px;background:#f4f4f4"></div>
<div style="position:absolute;left:888px;top:412px;width:142px;height:1px;background:#f4f4f4"></div>
<div style="position:absolute;left:888px;top:465px;width:142px;height:1px;background:#f4f4f4"></div>
<div style="position:absolute;left:888px;top:518px;width:142px;height:1px;background:#f4f4f4"></div>
<div style="position:absolute;left:888px;top:571px;width:142px;height:1px;background:#f4f4f4"></div>
<svg style="position:absolute;left:1033px;top:151px;" width="10" height="7" viewBox="0 0 10 7"><path d="M1 6 L5 2 L9 6" stroke="#b8b8b8" stroke-width="1.8" fill="none"/></svg>
<svg style="position:absolute;left:1033px;top:611px;" width="10" height="7" viewBox="0 0 10 7"><path d="M1 1 L5 5 L9 1" stroke="#b8b8b8" stroke-width="1.8" fill="none"/></svg>
<div style="position:absolute;left:1046px;top:104px;width:1px;height:521px;background:#fafafa"></div>
<div style="position:absolute;left:885px;top:624px;width:162px;height:1px;background:#b4b4b4"></div>
<div style="position:absolute;left:132px;top:112px;width:94px;height:52px;background:#f0f0f0;border:1px solid #dfe8f2;box-sizing:border-box"></div>
<div style="position:absolute;left:133px;top:113px;width:92px;height:24px;background:linear-gradient(#9dbadb,#bcd3ea)"></div>
<div style="position:absolute;left:132px;top:163px;width:94px;height:1px;background:#7fd0f0"></div>
<div style="position:absolute;left:205px;top:117px;width:16px;height:16px;background:#c74c4c"></div>
<svg style="position:absolute;left:209px;top:121px;" width="8" height="8" viewBox="0 0 8 8"><path d="M1.5 1.5 L6.5 6.5 M6.5 1.5 L1.5 6.5" stroke="#fff" stroke-width="1.6"/></svg>
<div style="position:absolute;left:134px;top:119.5px;font-size:12px;line-height:15px;color:#101030;font-weight:normal;white-space:pre;letter-spacing:-0.3px">Context</div>
<div style="position:absolute;left:168px;top:143px;font-size:12px;line-height:15px;color:#101030;font-weight:normal;white-space:pre;letter-spacing:-0.2px">Context</div>
<svg style="position:absolute;left:891px;top:124px;" width="17" height="17" viewBox="0 0 17 17"><path d="M1 2.5 L7 2.5 L8.5 4.5 L15 4.5 L15 15.5 L1 15.5 Z" fill="#f2c020" stroke="#d09010" stroke-width="0.8"/><rect x="1.5" y="6.5" width="13.5" height="9" fill="#fce870"/><rect x="1.5" y="11" width="13.5" height="4.5" fill="#f8d840"/></svg>
<svg style="position:absolute;left:916px;top:124px;" width="15" height="17" viewBox="0 0 15 17"><rect x="1" y="9" width="8" height="6.5" fill="#8a7070"/><rect x="1" y="13.5" width="8" height="2" fill="#40c0d8"/><path d="M6 9 V4.5 Q6 1.5 9 1.5 Q12 1.5 12 4.5 V7" stroke="#707888" stroke-width="1.8" fill="none"/></svg>
<svg style="position:absolute;left:1008px;top:125px;" width="17" height="16" viewBox="0 0 17 16"><rect x="1.5" y="2" width="4" height="3.5" fill="#fff" stroke="#000" stroke-width="1.1"/><rect x="1.5" y="7" width="4" height="3.5" fill="#fff" stroke="#000" stroke-width="1.1"/><rect x="1.5" y="12" width="4" height="3.5" fill="#fff" stroke="#000" stroke-width="1.1"/><path d="M2.5 4.5 L8.5 0.5 M2.5 14.5 L8.5 10.5" stroke="#e02020" stroke-width="1.1"/><path d="M9 3.5 H15 M9 8.5 H15 M9 13.5 H15" stroke="#909090" stroke-width="1.8" stroke-dasharray="1.2 0.5"/></svg>
<svg style="position:absolute;left:30px;top:492px;" width="16" height="15" viewBox="0 0 16 15"><path d="M2 13 L7 8" stroke="#e8b070" stroke-width="3" stroke-linecap="round"/><circle cx="10" cy="5.5" r="4.8" fill="#b8c8e0" stroke="#8898b0" stroke-width="1"/><path d="M7.5 5 H12.5 M10 2.5 V7.5" stroke="#a01040" stroke-width="1.5"/></svg>
<svg style="position:absolute;left:54px;top:493px;" width="14" height="14" viewBox="0 0 14 14"><defs><linearGradient id="bx" x1="0" y1="0" x2="1" y2="1"><stop offset="0" stop-color="#50a0d8"/><stop offset="1" stop-color="#1a58a8"/></linearGradient></defs><rect x="0" y="0" width="14" height="14" rx="1.5" fill="url(#bx)"/><path d="M7 12 V3.5 M3.5 7 L7 3 L10.5 7" stroke="#f0f040" stroke-width="2.2" fill="none"/></svg>
<svg style="position:absolute;left:77px;top:491px;" width="16" height="16" viewBox="0 0 16 16"><path d="M1 14 Q3 9 9 5 L15 1 L15 8 Q11 13 4 15 Z" fill="#c86a50"/><path d="M2 13.5 Q5 10 10 6.5 L14.5 3" stroke="#e09880" stroke-width="1" fill="none"/><path d="M4 15 Q11 13 15 8" stroke="#5a2a20" stroke-width="1" fill="none"/></svg>
<svg style="position:absolute;left:109px;top:529px;" width="7" height="8" viewBox="0 0 7 8"><path d="M0.5 0.5 L3.5 3 L6.5 0.5 M0.5 4.5 L3.5 7 L6.5 4.5" stroke="#a0a0a0" stroke-width="1.1" fill="none"/></svg>
<svg style="position:absolute;left:31px;top:560px;" width="15" height="16" viewBox="0 0 15 16"><path d="M7.5 1 L14 8 L12.5 8 L12.5 15.5 L2.5 15.5 L2.5 8 L1 8 Z" fill="#f8e8a0"/><path d="M1 8.5 L7.5 1.8 L14 8.5" stroke="#a02020" stroke-width="1.6" fill="none"/><rect x="6.3" y="0" width="2.4" height="2.5" fill="#a02020"/><rect x="6" y="8.5" width="3" height="7" fill="#a02020"/><path d="M2.5 15.5 H12.5" stroke="#d0c080" stroke-width="1"/></svg>
<svg style="position:absolute;left:54px;top:560px;" width="15" height="16" viewBox="0 0 15 16"><defs><linearGradient id="hd54_560" x1="0" y1="0" x2="0" y2="1"><stop offset="0" stop-color="#f4d8c8"/><stop offset="0.35" stop-color="#e09070"/><stop offset="1" stop-color="#b84828"/></linearGradient></defs><path d="M2 16 Q7.5 12 13 16 Z" fill="#2040a0"/><ellipse cx="7.5" cy="7.5" rx="4.6" ry="6.5" fill="url(#hd54_560)"/><path d="M5 6.5 H6.5 M8.5 6.5 H10" stroke="#6a3020" stroke-width="0.9"/><path d="M5.5 11.5 Q7.5 13.5 9.5 11.5" stroke="#5a2818" stroke-width="1.3" fill="none"/></svg>
<svg style="position:absolute;left:77px;top:560px;" width="15" height="16" viewBox="0 0 15 16"><path d="M1 7 L5 2 L14 6 L14 13 L6 15.5 L1 13 Z" fill="#f8e8a0"/><path d="M6 15.5 L14 13 L14 8 L6 10 Z" fill="#8a7a50"/><path d="M0.5 7.5 L5 1.5 L14.5 6 L14.5 8 L6 10 L5 4" fill="#b83030"/><rect x="3" y="8" width="2" height="6" fill="#a02020"/></svg>
<svg style="position:absolute;left:30px;top:582px;" width="15" height="16" viewBox="0 0 15 16"><defs><linearGradient id="hd30_582" x1="0" y1="0" x2="0" y2="1"><stop offset="0" stop-color="#f4d8c8"/><stop offset="0.35" stop-color="#e09070"/><stop offset="1" stop-color="#b84828"/></linearGradient></defs><rect x="0" y="14.5" width="4" height="1.5" fill="#2040a0"/><path d="M3.5 15 Q2 9 3.5 4 Q7 0.5 11 2.5 Q14 5 13.5 9 L14.5 10.5 L13 11 Q12.5 15 8 15.5 Z" fill="url(#hd30_582)"/><path d="M10 12.5 Q12 13.5 13 12.5" stroke="#503020" stroke-width="1.2" fill="none"/></svg>
<svg style="position:absolute;left:77px;top:582px;" width="15" height="16" viewBox="0 0 15 16"><defs><linearGradient id="hd77_582" x1="0" y1="0" x2="0" y2="1"><stop offset="0" stop-color="#f4d8c8"/><stop offset="0.35" stop-color="#e09070"/><stop offset="1" stop-color="#b84828"/></linearGradient></defs><rect x="11" y="14.5" width="4" height="1.5" fill="#2040a0"/><g transform="translate(15,0) scale(-1,1)"><path d="M3.5 15 Q2 9 3.5 4 Q7 0.5 11 2.5 Q14 5 13.5 9 L14.5 10.5 L13 11 Q12.5 15 8 15.5 Z" fill="url(#hd77_582)"/><path d="M10 12.5 Q12 13.5 13 12.5" stroke="#503020" stroke-width="1.2" fill="none"/></g></svg>
<div style="position:absolute;left:50px;top:579px;width:23px;height:22px;background:#f8f8f8;border-top:1px solid #a0a0a0;border-left:1px solid #a0a0a0;box-sizing:border-box"></div>
<svg style="position:absolute;left:55px;top:584px;" width="15" height="14" viewBox="0 0 15 14"><ellipse cx="7.5" cy="7" rx="5" ry="4.8" fill="#eef2f4" stroke="#60c8e0" stroke-width="0.8" stroke-dasharray="1 1"/><path d="M1 5 V1 H5 M10 1 H14 V5 M14 9 V13 H10 M5 13 H1 V9" stroke="#000" stroke-width="1.6" fill="none"/><path d="M5.5 12.5 H9.5" stroke="#c02050" stroke-width="1"/></svg>
<svg style="position:absolute;left:31px;top:605px;" width="15" height="16" viewBox="0 0 15 16"><g><path d="M1 9 L9 5 L14 8 L14 12 L7 15.5 L1 12.5 Z" fill="#f0e0a0"/><path d="M7 15.5 L14 12 L14 8 L7 11.5 Z" fill="#8a7a50"/><path d="M0.5 9.5 L8.5 2 L14.5 6 L14.5 8 L7 12 Z" fill="#b83030"/><path d="M0.5 9.5 L7 12 L14.5 8" stroke="#801818" stroke-width="0.8" fill="none"/><rect x="2.8" y="11.5" width="2" height="3" fill="#a02020"/></g></svg>
<svg style="position:absolute;left:54px;top:605px;" width="15" height="16" viewBox="0 0 15 16"><defs><linearGradient id="hd54_605" x1="0" y1="0" x2="0" y2="1"><stop offset="0" stop-color="#f4d8c8"/><stop offset="0.35" stop-color="#e09070"/><stop offset="1" stop-color="#b84828"/></linearGradient></defs><path d="M2 16 Q7.5 12 13 16 Z" fill="#2040a0"/><ellipse cx="7.5" cy="7.5" rx="4.6" ry="6.8" fill="url(#hd54_605)"/></svg>
<svg style="position:absolute;left:77px;top:605px;" width="15" height="16" viewBox="0 0 15 16"><g transform="translate(15,0) scale(-1,1)"><path d="M1 9 L9 5 L14 8 L14 12 L7 15.5 L1 12.5 Z" fill="#f0e0a0"/><path d="M7 15.5 L14 12 L14 8 L7 11.5 Z" fill="#8a7a50"/><path d="M0.5 9.5 L8.5 2 L14.5 6 L14.5 8 L7 12 Z" fill="#b83030"/><path d="M0.5 9.5 L7 12 L14.5 8" stroke="#801818" stroke-width="0.8" fill="none"/><rect x="2.8" y="11.5" width="2" height="3" fill="#a02020"/></g></svg>
<svg style="position:absolute;left:141px;top:142px;" width="17" height="17" viewBox="0 0 17 17"><rect x="1" y="1" width="12" height="13" fill="#e8e8d8" stroke="#8090b0" stroke-width="0.8"/><rect x="1" y="1" width="12" height="2.5" fill="#4070d0"/><rect x="3" y="5" width="7" height="2" fill="#c8c8b8"/><rect x="2" y="8" width="14" height="2" fill="#3080f0"/><rect x="3" y="11" width="12" height="4" fill="#d0d0c0" stroke="#9098a8" stroke-width="0.6"/></svg>
<div style="position:absolute;left:1px;top:625px;width:1047px;height:1px;background:#fbfbfb"></div>
<svg style="position:absolute;left:6px;top:630px;" width="6" height="5" viewBox="0 0 6 5" shape-rendering="crispEdges"><rect x="0" y="0" width="1" height="1" fill="#000"/><rect x="1" y="0" width="1" height="1" fill="#000"/><rect x="4" y="0" width="1" height="1" fill="#000"/><rect x="5" y="0" width="1" height="1" fill="#000"/><rect x="1" y="1" width="1" height="1" fill="#000"/><rect x="2" y="1" width="1" height="1" fill="#000"/><rect x="3" y="1" width="1" height="1" fill="#000"/><rect x="4" y="1" width="1" height="1" fill="#000"/><rect x="2" y="2" width="1" height="1" fill="#000"/><rect x="3" y="2" width="1" height="1" fill="#000"/><rect x="1" y="3" width="1" height="1" fill="#000"/><rect x="2" y="3" width="1" height="1" fill="#000"/><rect x="3" y="3" width="1" height="1" fill="#000"/><rect x="4" y="3" width="1" height="1" fill="#000"/><rect x="0" y="4" width="1" height="1" fill="#000"/><rect x="1" y="4" width="1" height="1" fill="#000"/><rect x="4" y="4" width="1" height="1" fill="#000"/><rect x="5" y="4" width="1" height="1" fill="#000"/></svg>
<svg style="position:absolute;left:8px;top:640px;" width="2" height="12" viewBox="0 0 2 12" shape-rendering="crispEdges"><rect x="1" y="0" width="1" height="1" fill="#b0b0b0"/><rect x="0" y="1" width="2" height="1" fill="#c8c8c8"/><rect x="1" y="4" width="1" height="1" fill="#b0b0b0"/><rect x="0" y="5" width="2" height="1" fill="#c8c8c8"/><rect x="1" y="8" width="1" height="1" fill="#b0b0b0"/><rect x="0" y="9" width="2" height="1" fill="#c8c8c8"/></svg>
<div style="position:absolute;left:17px;top:628px;width:22px;height:20px;background:#c6def3;border:1px solid #86c2f5;box-sizing:border-box"></div>
<div style="position:absolute;left:18px;top:632px;font-size:13px;line-height:16px;color:#101030;font-weight:normal;white-space:pre;width:21px;text-align:center">S</div>
<div style="position:absolute;left:39px;top:632px;font-size:13px;line-height:16px;color:#101030;font-weight:normal;white-space:pre;width:21px;text-align:center">w</div>
<div style="position:absolute;left:59px;top:628px;width:22px;height:20px;background:#c6def3;border:1px solid #86c2f5;box-sizing:border-box"></div>
<div style="position:absolute;left:60px;top:632px;font-size:13px;line-height:16px;color:#101030;font-weight:normal;white-space:pre;width:21px;text-align:center">O</div>
<div style="position:absolute;left:80px;top:628px;width:22px;height:20px;background:#c6def3;border:1px solid #86c2f5;box-sizing:border-box"></div>
<div style="position:absolute;left:81px;top:632px;font-size:13px;line-height:16px;color:#101030;font-weight:normal;white-space:pre;width:21px;text-align:center">T</div>
<div style="position:absolute;left:101px;top:628px;width:22px;height:20px;background:#c6def3;border:1px solid #86c2f5;box-sizing:border-box"></div>
<div style="position:absolute;left:102px;top:632px;font-size:13px;line-height:16px;color:#101030;font-weight:normal;white-space:pre;width:21px;text-align:center">H</div>
<div style="position:absolute;left:122px;top:628px;width:22px;height:20px;background:#c6def3;border:1px solid #86c2f5;box-sizing:border-box"></div>
<div style="position:absolute;left:123px;top:632px;font-size:13px;line-height:16px;color:#101030;font-weight:normal;white-space:pre;width:21px;text-align:center">L</div>
<div style="position:absolute;left:143px;top:628px;width:22px;height:20px;background:#c6def3;border:1px solid #86c2f5;box-sizing:border-box"></div>
<div style="position:absolute;left:144px;top:632px;font-size:13px;line-height:16px;color:#101030;font-weight:normal;white-space:pre;width:21px;text-align:center">U</div>
<div style="position:absolute;left:164px;top:628px;width:22px;height:20px;background:#c6def3;border:1px solid #86c2f5;box-sizing:border-box"></div>
<div style="position:absolute;left:165px;top:632px;font-size:13px;line-height:16px;color:#101030;font-weight:normal;white-space:pre;width:21px;text-align:center">D</div>
<div style="position:absolute;left:185px;top:628px;width:22px;height:20px;background:#c6def3;border:1px solid #86c2f5;box-sizing:border-box"></div>
<div style="position:absolute;left:186px;top:632px;font-size:13px;line-height:16px;color:#101030;font-weight:normal;white-space:pre;width:21px;text-align:center">F</div>
<div style="position:absolute;left:206px;top:628px;width:22px;height:20px;background:#c6def3;border:1px solid #86c2f5;box-sizing:border-box"></div>
<div style="position:absolute;left:207px;top:632px;font-size:13px;line-height:16px;color:#101030;font-weight:normal;white-space:pre;width:21px;text-align:center">B</div>
<div style="position:absolute;left:227px;top:628px;width:21px;height:20px;background:#c6def3;border:1px solid #86c2f5;box-sizing:border-box"></div>
<div style="position:absolute;left:228px;top:632px;font-size:13px;line-height:16px;color:#101030;font-weight:normal;white-space:pre;width:21px;text-align:center">K</div>
<div style="position:absolute;left:252px;top:627px;width:1px;height:24px;background:#fcfcfc"></div>
<div style="position:absolute;left:251px;top:627px;width:1px;height:24px;background:#989898"></div>
<svg style="position:absolute;left:257px;top:630px;" width="6" height="5" viewBox="0 0 6 5" shape-rendering="crispEdges"><rect x="0" y="0" width="1" height="1" fill="#000"/><rect x="1" y="0" width="1" height="1" fill="#000"/><rect x="4" y="0" width="1" height="1" fill="#000"/><rect x="5" y="0" width="1" height="1" fill="#000"/><rect x="1" y="1" width="1" height="1" fill="#000"/><rect x="2" y="1" width="1" height="1" fill="#000"/><rect x="3" y="1" width="1" height="1" fill="#000"/><rect x="4" y="1" width="1" height="1" fill="#000"/><rect x="2" y="2" width="1" height="1" fill="#000"/><rect x="3" y="2" width="1" height="1" fill="#000"/><rect x="1" y="3" width="1" height="1" fill="#000"/><rect x="2" y="3" width="1" height="1" fill="#000"/><rect x="3" y="3" width="1" height="1" fill="#000"/><rect x="4" y="3" width="1" height="1" fill="#000"/><rect x="0" y="4" width="1" height="1" fill="#000"/><rect x="1" y="4" width="1" height="1" fill="#000"/><rect x="4" y="4" width="1" height="1" fill="#000"/><rect x="5" y="4" width="1" height="1" fill="#000"/></svg>
<svg style="position:absolute;left:259px;top:640px;" width="2" height="12" viewBox="0 0 2 12" shape-rendering="crispEdges"><rect x="1" y="0" width="1" height="1" fill="#b0b0b0"/><rect x="0" y="1" width="2" height="1" fill="#c8c8c8"/><rect x="1" y="4" width="1" height="1" fill="#b0b0b0"/><rect x="0" y="5" width="2" height="1" fill="#c8c8c8"/><rect x="1" y="8" width="1" height="1" fill="#b0b0b0"/><rect x="0" y="9" width="2" height="1" fill="#c8c8c8"/></svg>
<div style="position:absolute;left:268px;top:628px;width:23px;height:21px;background:#c6def3;border:1px solid #86c2f5;box-sizing:border-box"></div>
<div style="position:absolute;left:268px;top:630px;font-size:15.5px;line-height:19px;color:#101018;font-weight:normal;white-space:pre;width:23px;text-align:center">S</div>
<div style="position:absolute;left:291px;top:630px;font-size:16.5px;line-height:19px;color:#000;font-weight:normal;white-space:pre;width:23px;text-align:center">W</div>
<div style="position:absolute;left:314px;top:628px;width:24px;height:21px;background:#c6def3;border:1px solid #86c2f5;box-sizing:border-box"></div>
<div style="position:absolute;left:314px;top:630px;font-size:15.5px;line-height:19px;color:#101018;font-weight:normal;white-space:pre;width:23px;text-align:center">O</div>
<div style="position:absolute;left:337px;top:628px;width:24px;height:21px;background:#c6def3;border:1px solid #86c2f5;box-sizing:border-box"></div>
<div style="position:absolute;left:337px;top:630px;font-size:15.5px;line-height:19px;color:#101018;font-weight:normal;white-space:pre;width:23px;text-align:center">T</div>
<div style="position:absolute;left:360px;top:628px;width:24px;height:21px;background:#c6def3;border:1px solid #86c2f5;box-sizing:border-box"></div>
<div style="position:absolute;left:360px;top:630px;font-size:15.5px;line-height:19px;color:#101018;font-weight:normal;white-space:pre;width:23px;text-align:center">H</div>
<div style="position:absolute;left:383px;top:628px;width:24px;height:21px;background:#c6def3;border:1px solid #86c2f5;box-sizing:border-box"></div>
<div style="position:absolute;left:383px;top:630px;font-size:15.5px;line-height:19px;color:#101018;font-weight:normal;white-space:pre;width:23px;text-align:center">L</div>
<div style="position:absolute;left:406px;top:628px;width:24px;height:21px;background:#c6def3;border:1px solid #86c2f5;box-sizing:border-box"></div>
<div style="position:absolute;left:406px;top:630px;font-size:15.5px;line-height:19px;color:#101018;font-weight:normal;white-space:pre;width:23px;text-align:center">U</div>
<div style="position:absolute;left:429px;top:628px;width:24px;height:21px;background:#c6def3;border:1px solid #86c2f5;box-sizing:border-box"></div>
<div style="position:absolute;left:429px;top:630px;font-size:15.5px;line-height:19px;color:#101018;font-weight:normal;white-space:pre;width:23px;text-align:center">D</div>
<div style="position:absolute;left:452px;top:628px;width:24px;height:21px;background:#c6def3;border:1px solid #86c2f5;box-sizing:border-box"></div>
<div style="position:absolute;left:452px;top:630px;font-size:15.5px;line-height:19px;color:#101018;font-weight:normal;white-space:pre;width:23px;text-align:center">F</div>
<div style="position:absolute;left:475px;top:628px;width:24px;height:21px;background:#c6def3;border:1px solid #86c2f5;box-sizing:border-box"></div>
<div style="position:absolute;left:475px;top:630px;font-size:15.5px;line-height:19px;color:#101018;font-weight:normal;white-space:pre;width:23px;text-align:center">B</div>
<div style="position:absolute;left:498px;top:628px;width:23px;height:21px;background:#c6def3;border:1px solid #86c2f5;box-sizing:border-box"></div>
<div style="position:absolute;left:498px;top:630px;font-size:15.5px;line-height:19px;color:#101018;font-weight:normal;white-space:pre;width:23px;text-align:center">K</div>
<div style="position:absolute;left:525px;top:627px;width:1px;height:24px;background:#fcfcfc"></div>
<div style="position:absolute;left:524px;top:627px;width:1px;height:24px;background:#989898"></div>
<svg style="position:absolute;left:530px;top:630px;" width="6" height="5" viewBox="0 0 6 5" shape-rendering="crispEdges"><rect x="0" y="0" width="1" height="1" fill="#000"/><rect x="1" y="0" width="1" height="1" fill="#000"/><rect x="4" y="0" width="1" height="1" fill="#000"/><rect x="5" y="0" width="1" height="1" fill="#000"/><rect x="1" y="1" width="1" height="1" fill="#000"/><rect x="2" y="1" width="1" height="1" fill="#000"/><rect x="3" y="1" width="1" height="1" fill="#000"/><rect x="4" y="1" width="1" height="1" fill="#000"/><rect x="2" y="2" width="1" height="1" fill="#000"/><rect x="3" y="2" width="1" height="1" fill="#000"/><rect x="1" y="3" width="1" height="1" fill="#000"/><rect x="2" y="3" width="1" height="1" fill="#000"/><rect x="3" y="3" width="1" height="1" fill="#000"/><rect x="4" y="3" width="1" height="1" fill="#000"/><rect x="0" y="4" width="1" height="1" fill="#000"/><rect x="1" y="4" width="1" height="1" fill="#000"/><rect x="4" y="4" width="1" height="1" fill="#000"/><rect x="5" y="4" width="1" height="1" fill="#000"/></svg>
<svg style="position:absolute;left:532px;top:640px;" width="2" height="12" viewBox="0 0 2 12" shape-rendering="crispEdges"><rect x="1" y="0" width="1" height="1" fill="#b0b0b0"/><rect x="0" y="1" width="2" height="1" fill="#c8c8c8"/><rect x="1" y="4" width="1" height="1" fill="#b0b0b0"/><rect x="0" y="5" width="2" height="1" fill="#c8c8c8"/><rect x="1" y="8" width="1" height="1" fill="#b0b0b0"/><rect x="0" y="9" width="2" height="1" fill="#c8c8c8"/></svg>
<svg style="position:absolute;left:543px;top:631px;" width="11" height="16" viewBox="0 0 11 16"><path d="M5.5 0.5 C1.5 0.5 0 4 1.2 7 C2 9 3 9.5 3 11.5 L8 11.5 C8 9.5 9 9 9.8 7 C11 4 9.5 0.5 5.5 0.5 Z" fill="#f4f040" stroke="#a8a820" stroke-width="0.8"/><circle cx="4" cy="4" r="1.8" fill="#ffffe8" opacity="0.8"/><rect x="3" y="12" width="5" height="3" fill="#686868"/></svg>
<div style="position:absolute;left:1px;top:652px;width:1046px;height:1px;background:#a9a9a9"></div>
<div style="position:absolute;left:1px;top:653px;width:1047px;height:1px;background:#fbfbfb"></div>
<svg style="position:absolute;left:6px;top:658px;" width="6" height="5" viewBox="0 0 6 5" shape-rendering="crispEdges"><rect x="0" y="0" width="1" height="1" fill="#000"/><rect x="1" y="0" width="1" height="1" fill="#000"/><rect x="4" y="0" width="1" height="1" fill="#000"/><rect x="5" y="0" width="1" height="1" fill="#000"/><rect x="1" y="1" width="1" height="1" fill="#000"/><rect x="2" y="1" width="1" height="1" fill="#000"/><rect x="3" y="1" width="1" height="1" fill="#000"/><rect x="4" y="1" width="1" height="1" fill="#000"/><rect x="2" y="2" width="1" height="1" fill="#000"/><rect x="3" y="2" width="1" height="1" fill="#000"/><rect x="1" y="3" width="1" height="1" fill="#000"/><rect x="2" y="3" width="1" height="1" fill="#000"/><rect x="3" y="3" width="1" height="1" fill="#000"/><rect x="4" y="3" width="1" height="1" fill="#000"/><rect x="0" y="4" width="1" height="1" fill="#000"/><rect x="1" y="4" width="1" height="1" fill="#000"/><rect x="4" y="4" width="1" height="1" fill="#000"/><rect x="5" y="4" width="1" height="1" fill="#000"/></svg>
<svg style="position:absolute;left:8px;top:668px;" width="2" height="12" viewBox="0 0 2 12" shape-rendering="crispEdges"><rect x="1" y="0" width="1" height="1" fill="#b0b0b0"/><rect x="0" y="1" width="2" height="1" fill="#c8c8c8"/><rect x="1" y="4" width="1" height="1" fill="#b0b0b0"/><rect x="0" y="5" width="2" height="1" fill="#c8c8c8"/><rect x="1" y="8" width="1" height="1" fill="#b0b0b0"/><rect x="0" y="9" width="2" height="1" fill="#c8c8c8"/></svg>
<svg style="position:absolute;left:20px;top:658px;" width="17" height="17" viewBox="0 0 17 17"><circle cx="8.5" cy="8.5" r="6.3" fill="none" stroke="#c02040" stroke-width="1.6"/><path d="M0.5 8.5 H16.5 M8.5 0.5 V16.5" stroke="#000" stroke-width="1.1"/><path d="M4 13 L13 4" stroke="#c02040" stroke-width="1.5"/><circle cx="8.5" cy="8.5" r="1.5" fill="#d04050"/></svg>
<div style="position:absolute;left:40px;top:656px;width:23px;height:21px;background:#c6def3;border:1px solid #86c2f5;box-sizing:border-box"></div>
<svg style="position:absolute;left:44px;top:660px;" width="17" height="17" viewBox="0 0 17 17"><path d="M2 2 L11 1 L16 3 L16 6 L6 6 Z" fill="#f8eebc" stroke="#d0c090" stroke-width="0.5"/><path d="M2 6 L16 6 L16 9 L6 9 Z" fill="#f8eebc" stroke="#d0c090" stroke-width="0.5"/><path d="M2 9 L16 9 L16 12 L6 12 Z" fill="#f8eebc" stroke="#d0c090" stroke-width="0.5"/><path d="M2 12 L16 12 L16 15 L6 15 Z" fill="#f8eebc" stroke="#d0c090" stroke-width="0.5"/><path d="M6 4 V16" stroke="#d02020" stroke-width="2"/><circle cx="6" cy="4.5" r="1.5" fill="#d02020"/><circle cx="6" cy="8" r="1.5" fill="#d02020"/><circle cx="6" cy="11.5" r="1.5" fill="#d02020"/><circle cx="6" cy="15" r="1.5" fill="#d02020"/></svg>
<svg style="position:absolute;left:66px;top:660px;" width="16" height="16" viewBox="0 0 16 16"><rect x="0.5" y="0.5" width="15" height="11" fill="#000" stroke="#b0a890"/><path d="M4 9 L12 3" stroke="#fff" stroke-width="1.2"/><circle cx="8" cy="6" r="2" fill="#e03030"/><rect x="7" y="12" width="2" height="2" fill="#000"/><rect x="2" y="14" width="12" height="2" fill="#000"/></svg>
<svg style="position:absolute;left:88px;top:659px;" width="17" height="17" viewBox="0 0 17 17"><path d="M1.5 15.5 L15.5 1.5" stroke="#d02030" stroke-width="2.6" stroke-linecap="round"/></svg>
<div style="position:absolute;left:109px;top:656px;width:24px;height:21px;background:#c6def3;border:1px solid #86c2f5;box-sizing:border-box"></div>
<div style="position:absolute;left:132px;top:656px;width:24px;height:21px;background:#c6def3;border:1px solid #86c2f5;box-sizing:border-box"></div>
<div style="position:absolute;left:155px;top:656px;width:24px;height:21px;background:#c6def3;border:1px solid #86c2f5;box-sizing:border-box"></div>
<div style="position:absolute;left:178px;top:656px;width:23px;height:21px;background:#c6def3;border:1px solid #86c2f5;box-sizing:border-box"></div>
<svg style="position:absolute;left:112px;top:659px;" width="17" height="17" viewBox="0 0 17 17"><path d="M3 14 L14 3" stroke="#000" stroke-width="1.2"/><circle cx="3" cy="14" r="2" fill="#e02020"/><circle cx="14" cy="3" r="2" fill="#e02020"/></svg>
<svg style="position:absolute;left:135px;top:659px;" width="17" height="17" viewBox="0 0 17 17"><path d="M2 16 L16 2" stroke="#000" stroke-width="1.2"/><circle cx="9" cy="9" r="2.3" fill="#e02020"/></svg>
<svg style="position:absolute;left:158px;top:659px;" width="17" height="17" viewBox="0 0 17 17"><path d="M2 2 L16 16 M16 2 L2 16" stroke="#000" stroke-width="1.2"/><circle cx="9" cy="9" r="2.3" fill="#e02020"/></svg>
<svg style="position:absolute;left:181px;top:659px;" width="17" height="17" viewBox="0 0 17 17"><circle cx="8.5" cy="8.5" r="6" fill="none" stroke="#000" stroke-width="1.3"/><path d="M5.5 8.5 H11.5 M8.5 5.5 V11.5" stroke="#e02020" stroke-width="1.4"/></svg>
<svg style="position:absolute;left:203px;top:659px;" width="17" height="17" viewBox="0 0 17 17"><circle cx="8.5" cy="8.5" r="6" fill="none" stroke="#000" stroke-width="1.3"/><circle cx="2.5" cy="8.5" r="1.8" fill="#e02020"/><circle cx="14.5" cy="8.5" r="1.8" fill="#e02020"/><circle cx="8.5" cy="2.5" r="1.8" fill="#e02020"/><circle cx="8.5" cy="14.5" r="1.8" fill="#e02020"/></svg>
<svg style="position:absolute;left:226px;top:659px;" width="17" height="17" viewBox="0 0 17 17"><path d="M1 16 L9 7" stroke="#000" stroke-width="1.3"/><path d="M15 2 Q8 3 8 9 Q8 15 15 16" stroke="#000" stroke-width="1.3" fill="none"/><circle cx="9" cy="6" r="1.5" fill="#e02020"/></svg>
<svg style="position:absolute;left:249px;top:659px;" width="17" height="17" viewBox="0 0 17 17"><path d="M1 16 L16 2" stroke="#d02030" stroke-width="1.5"/><circle cx="3" cy="14" r="2" fill="#e02020"/><circle cx="7" cy="10.5" r="2" fill="#e02020"/><circle cx="11" cy="7" r="2" fill="#e02020"/><circle cx="14.5" cy="3.5" r="2" fill="#e02020"/></svg>
<svg style="position:absolute;left:272px;top:659px;" width="17" height="17" viewBox="0 0 17 17"><path d="M6 1 V15 M0 15 H16" stroke="#000" stroke-width="1.3"/><path d="M7 10.5 H11.5 V15" stroke="#e02020" stroke-width="1" stroke-dasharray="1 1" fill="none"/><circle cx="7" cy="15" r="1.6" fill="#e02020"/></svg>
<svg style="position:absolute;left:295px;top:659px;" width="17" height="17" viewBox="0 0 17 17"><path d="M0 3 H5" stroke="#000" stroke-width="1.3"/><path d="M6 3 H10" stroke="#666" stroke-dasharray="1 1"/><path d="M11 3 H16 M13.5 0.5 V6" stroke="#e02020" stroke-width="1.3"/><path d="M13.5 8 V16" stroke="#000" stroke-width="1.2" stroke-dasharray="2 1.5"/></svg>
<svg style="position:absolute;left:318px;top:659px;" width="17" height="17" viewBox="0 0 17 17"><circle cx="2.5" cy="8.5" r="1.8" fill="#909080"/><path d="M5 8.5 H11 M9 6.5 L11 8.5 L9 10.5" stroke="#000" stroke-width="1.1" fill="none"/><circle cx="14" cy="8.5" r="2" fill="#e02020"/></svg>
<svg style="position:absolute;left:341px;top:659px;" width="17" height="17" viewBox="0 0 17 17"><text x="5.5" y="6" font-size="7" font-weight="bold" fill="#333" font-family="Liberation Sans">?</text><circle cx="2.5" cy="11.5" r="1.8" fill="#909080"/><path d="M5 11.5 H11 M9 9.5 L11 11.5 L9 13.5" stroke="#000" stroke-width="1.1" fill="none"/><circle cx="14" cy="11.5" r="2" fill="#e02020"/></svg>
<div style="position:absolute;left:362px;top:656px;width:23px;height:21px;background:#c6def3;border:1px solid #86c2f5;box-sizing:border-box"></div>
<svg style="position:absolute;left:365px;top:659px;" width="17" height="17" viewBox="0 0 17 17"><rect x="0.5" y="0.5" width="16" height="16" fill="#444"/><path d="M0 4 L4 0 M0 8 L8 0 M0 12 L12 0 M0 16 L16 0 M4 16 L16 4 M8 16 L16 8 M12 16 L16 12" stroke="#ccc" stroke-width="0.8"/><circle cx="10" cy="7.5" r="4.5" fill="#c8dcf0" stroke="#333" stroke-width="1"/><path d="M2 15 L6.5 10.5" stroke="#d08030" stroke-width="2.2"/></svg>
<svg style="position:absolute;left:396px;top:659px;" width="8" height="6" viewBox="0 0 8 6"><path d="M0.5 0.5 L3 3 L0.5 5.5 M4.5 0.5 L7 3 L4.5 5.5" stroke="#a0a0a0" stroke-width="1.2" fill="none"/></svg>
<div style="position:absolute;left:408px;top:654px;width:1px;height:26px;background:#fcfcfc"></div>
<div style="position:absolute;left:407px;top:654px;width:1px;height:26px;background:#989898"></div>
<svg style="position:absolute;left:411px;top:656px;" width="2" height="24" viewBox="0 0 2 24" shape-rendering="crispEdges"><rect x="1" y="0" width="1" height="1" fill="#b0b0b0"/><rect x="0" y="1" width="2" height="1" fill="#c8c8c8"/><rect x="1" y="4" width="1" height="1" fill="#b0b0b0"/><rect x="0" y="5" width="2" height="1" fill="#c8c8c8"/><rect x="1" y="8" width="1" height="1" fill="#b0b0b0"/><rect x="0" y="9" width="2" height="1" fill="#c8c8c8"/><rect x="1" y="12" width="1" height="1" fill="#b0b0b0"/><rect x="0" y="13" width="2" height="1" fill="#c8c8c8"/><rect x="1" y="16" width="1" height="1" fill="#b0b0b0"/><rect x="0" y="17" width="2" height="1" fill="#c8c8c8"/><rect x="1" y="20" width="1" height="1" fill="#b0b0b0"/><rect x="0" y="21" width="2" height="1" fill="#c8c8c8"/></svg>
<svg style="position:absolute;left:416px;top:659px;" width="16" height="16" viewBox="0 0 16 16"><path d="M8.5 1 L16 15 L1 15 Z" fill="#f8d020" stroke="#c89800" stroke-width="0.8" stroke-linejoin="round"/><rect x="7.6" y="5" width="1.8" height="6" fill="#000"/><rect x="7.6" y="12" width="1.8" height="1.8" fill="#000"/></svg>
<div style="position:absolute;left:438px;top:660px;font-size:12px;line-height:15px;color:#101030;font-weight:normal;white-space:pre;letter-spacing:0.05px">Entity=All;  Color=All;  Line Type=All;  Weight=All;</div>
<div style="position:absolute;left:728px;top:654px;width:1px;height:26px;background:#fcfcfc"></div>
<div style="position:absolute;left:727px;top:654px;width:1px;height:26px;background:#989898"></div>
<svg style="position:absolute;left:730px;top:656px;" width="2" height="24" viewBox="0 0 2 24" shape-rendering="crispEdges"><rect x="1" y="0" width="1" height="1" fill="#b0b0b0"/><rect x="0" y="1" width="2" height="1" fill="#c8c8c8"/><rect x="1" y="4" width="1" height="1" fill="#b0b0b0"/><rect x="0" y="5" width="2" height="1" fill="#c8c8c8"/><rect x="1" y="8" width="1" height="1" fill="#b0b0b0"/><rect x="0" y="9" width="2" height="1" fill="#c8c8c8"/><rect x="1" y="12" width="1" height="1" fill="#b0b0b0"/><rect x="0" y="13" width="2" height="1" fill="#c8c8c8"/><rect x="1" y="16" width="1" height="1" fill="#b0b0b0"/><rect x="0" y="17" width="2" height="1" fill="#c8c8c8"/><rect x="1" y="20" width="1" height="1" fill="#b0b0b0"/><rect x="0" y="21" width="2" height="1" fill="#c8c8c8"/></svg>
<svg style="position:absolute;left:736px;top:659px;" width="17" height="17" viewBox="0 0 17 17"><defs><radialGradient id="ig" cx="0.4" cy="0.35" r="0.7"><stop offset="0" stop-color="#ffffff"/><stop offset="1" stop-color="#d8dce8"/></radialGradient></defs><circle cx="8" cy="8" r="7.3" fill="url(#ig)" stroke="#b8bccc" stroke-width="0.8"/><circle cx="8.2" cy="3.8" r="1.4" fill="#3a48a8"/><path d="M6.3 6.3 H9.2 V11.8 H10.4 V13 H6 V11.8 H7.2 V7.5 H6.3 Z" fill="#3a48a8"/></svg>
<div style="position:absolute;left:758px;top:660px;font-size:12px;line-height:15px;color:#101030;font-weight:normal;white-space:pre;">Select mask option.</div>
<div style="position:absolute;left:1047px;top:49px;width:1px;height:632px;background:#cac2bc"></div>
<div style="position:absolute;left:1046px;top:49px;width:1px;height:632px;background:#f6f6f6"></div>
<div style="position:absolute;left:1px;top:680px;width:1047px;height:1px;background:#d0c8c0"></div>
<svg style="position:absolute;left:888px;top:148px;" width="142" height="52" viewBox="0 0 142 52"><rect x="13.5" y="5.5" width="43" height="42" fill="none" stroke="#5050ff" stroke-width="1.1"/><path d="M18.5 9.5 L53 44 M53 9.5 L18.5 44" stroke="#c0c0c0" stroke-width="1.1"/></svg>
<svg style="position:absolute;left:888px;top:201px;" width="142" height="52" viewBox="0 0 142 52"><rect x="15" y="4" width="40" height="7.5" fill="#0000ff"/><rect x="15" y="43" width="40" height="5.5" fill="#0000ff"/><rect x="14" y="13" width="41" height="1.2" fill="#0000ff"/><rect x="13" y="13" width="2" height="24" fill="#0000ff"/><rect x="53.5" y="11" width="1.6" height="25" fill="#0000ff"/><rect x="13" y="6" width="1.3" height="7" fill="#b4b4b4"/><rect x="13" y="36" width="1.3" height="7" fill="#b4b4b4"/><rect x="15.8" y="11" width="1.2" height="32" fill="#b4b4b4"/><rect x="55.5" y="6" width="1.4" height="37" fill="#b4b4b4"/></svg>
<svg style="position:absolute;left:888px;top:254px;" width="142" height="52" viewBox="0 0 142 52"><rect x="26" y="6.5" width="19" height="6" fill="#0000ff"/><rect x="16" y="9" width="3" height="5" fill="#0000ff"/><rect x="52" y="9" width="3" height="5" fill="#0000ff"/><rect x="20" y="41.5" width="31" height="1.2" fill="#0000ff"/><rect x="20" y="44" width="31" height="2" fill="#0000ff"/><rect x="13" y="31.5" width="2.5" height="1.5" fill="#0000ff"/><rect x="55.5" y="31.5" width="2.5" height="1.5" fill="#0000ff"/><path d="M14.5 31.5 L14.5 11 Q14.5 5.5 20 5.5 L51 5.5 Q56.5 5.5 56.5 11 L56.5 31.5" fill="none" stroke="#b4b4b4" stroke-width="2.4"/><path d="M17 8 L27 7 L20.5 47.5 L17 47.5 Z" fill="#b4b4b4"/><path d="M19.2 10 L21.8 10 L19.8 28 L19.4 28 Z" fill="#000"/><path d="M44 7 L54 8 L54 47.5 L50.5 47.5 Z" fill="#b4b4b4"/><path d="M49.2 10 L51.8 10 L51.6 28 L51.2 28 Z" fill="#000"/></svg>
<svg style="position:absolute;left:888px;top:307px;" width="142" height="52" viewBox="0 0 142 52"><rect x="13.2" y="4" width="3" height="43.5" fill="#b4b4b4"/><rect x="48" y="4" width="3" height="43.5" fill="#b4b4b4"/><path d="M16 5 L48 5 L46 8 L18 8 Z" fill="#b4b4b4"/><path d="M18 8 L46 8 L48 10 L48 13.5 L16 13.5 L16 10 Z" fill="#0000ff"/><rect x="19.5" y="9.5" width="1" height="1" fill="#b4b4b4"/><rect x="44.5" y="9.5" width="1" height="1" fill="#b4b4b4"/><rect x="16" y="41.8" width="32" height="1.2" fill="#0000ff"/><rect x="16" y="44" width="32" height="1.8" fill="#0000ff"/></svg>
<svg style="position:absolute;left:888px;top:360px;" width="142" height="52" viewBox="0 0 142 52"><rect x="14.6" y="5.5" width="36.8" height="40" fill="none" stroke="#b4b4b4" stroke-width="2.6"/><rect x="14.9" y="11.7" width="36" height="28.4" fill="none" stroke="#5050ff" stroke-width="1.6"/></svg>
<svg style="position:absolute;left:888px;top:413px;" width="142" height="52" viewBox="0 0 142 52"><rect x="14.2" y="4.8" width="58.5" height="41.5" rx="2.5" fill="#0000ff" stroke="#b4b4b4" stroke-width="2.2"/><rect x="25" y="15" width="36" height="30" fill="#000"/><rect x="25.0" y="15" width="1" height="30" fill="#0000ff"/><rect x="29.4" y="15" width="1" height="30" fill="#0000ff"/><rect x="33.8" y="15" width="1" height="30" fill="#0000ff"/><rect x="38.2" y="15" width="1" height="30" fill="#0000ff"/><rect x="42.6" y="15" width="1" height="30" fill="#0000ff"/><rect x="47.0" y="15" width="1" height="30" fill="#0000ff"/><rect x="51.4" y="15" width="1" height="30" fill="#0000ff"/><rect x="55.8" y="15" width="1" height="30" fill="#0000ff"/><rect x="60.2" y="15" width="1" height="30" fill="#0000ff"/><rect x="25" y="15.0" width="36" height="1" fill="#0000ff"/><rect x="25" y="19.1" width="36" height="1" fill="#0000ff"/><rect x="25" y="23.2" width="36" height="1" fill="#0000ff"/><rect x="25" y="27.3" width="36" height="1" fill="#0000ff"/><rect x="25" y="31.4" width="36" height="1" fill="#0000ff"/><rect x="25" y="35.5" width="36" height="1" fill="#0000ff"/><rect x="25" y="39.6" width="36" height="1" fill="#0000ff"/><rect x="25" y="43.7" width="36" height="1" fill="#0000ff"/><line x1="18.5" y1="10" x2="18.5" y2="45" stroke="#000" stroke-width="1" stroke-dasharray="3 1"/><line x1="21.5" y1="10" x2="21.5" y2="45" stroke="#000" stroke-width="1" stroke-dasharray="3 1"/><line x1="64.5" y1="10" x2="64.5" y2="45" stroke="#000" stroke-width="1" stroke-dasharray="3 1"/><line x1="67.5" y1="10" x2="67.5" y2="45" stroke="#000" stroke-width="1" stroke-dasharray="3 1"/><path d="M33 8.5 H53" stroke="#000" stroke-width="1" stroke-dasharray="3 1.5"/><path d="M27 21 Q43 17 59 21 M27 40 Q43 44 59 40" stroke="#000" stroke-width="0.8" fill="none"/></svg>
<svg style="position:absolute;left:888px;top:466px;" width="142" height="52" viewBox="0 0 142 52"><defs><clipPath id="c6"><path d="M34.5 4 Q55 4 56 25.5 Q55 47 34.5 47 Q14 47 13 25.5 Q14 4 34.5 4 Z"/></clipPath></defs><g clip-path="url(#c6)"><rect x="13.0" y="3" width="1.1" height="45" fill="#0000ff"/><rect x="16.6" y="3" width="1.1" height="45" fill="#0000ff"/><rect x="20.2" y="3" width="1.1" height="45" fill="#0000ff"/><rect x="23.8" y="3" width="1.1" height="45" fill="#0000ff"/><rect x="27.4" y="3" width="1.1" height="45" fill="#0000ff"/><rect x="31.0" y="3" width="1.1" height="45" fill="#0000ff"/><rect x="34.6" y="3" width="1.1" height="45" fill="#0000ff"/><rect x="38.2" y="3" width="1.1" height="45" fill="#0000ff"/><rect x="41.8" y="3" width="1.1" height="45" fill="#0000ff"/><rect x="45.4" y="3" width="1.1" height="45" fill="#0000ff"/><rect x="49.0" y="3" width="1.1" height="45" fill="#0000ff"/><rect x="52.6" y="3" width="1.1" height="45" fill="#0000ff"/><rect x="56.2" y="3" width="1.1" height="45" fill="#0000ff"/><rect x="12" y="4.0" width="46" height="1.1" fill="#0000ff"/><rect x="12" y="7.6" width="46" height="1.1" fill="#0000ff"/><rect x="12" y="11.2" width="46" height="1.1" fill="#0000ff"/><rect x="12" y="14.8" width="46" height="1.1" fill="#0000ff"/><rect x="12" y="18.4" width="46" height="1.1" fill="#0000ff"/><rect x="12" y="22.0" width="46" height="1.1" fill="#0000ff"/><rect x="12" y="25.6" width="46" height="1.1" fill="#0000ff"/><rect x="12" y="29.2" width="46" height="1.1" fill="#0000ff"/><rect x="12" y="32.8" width="46" height="1.1" fill="#0000ff"/><rect x="12" y="36.4" width="46" height="1.1" fill="#0000ff"/><rect x="12" y="40.0" width="46" height="1.1" fill="#0000ff"/><rect x="12" y="43.6" width="46" height="1.1" fill="#0000ff"/><rect x="12" y="47.2" width="46" height="1.1" fill="#0000ff"/></g><path d="M34.5 4.3 Q55 4.3 55.7 25.5 Q55 46.7 34.5 46.7 Q14 46.7 13.3 25.5 Q14 4.3 34.5 4.3 Z" fill="none" stroke="#0000ff" stroke-width="1.6"/><path d="M19 9.5 L51.5 40 M51.5 9.5 L19 40" stroke="#c8c8c0" stroke-width="1.3"/></svg>
<svg style="position:absolute;left:888px;top:519px;" width="142" height="52" viewBox="0 0 142 52"><path d="M13.3 9 L20 4.5 L50 4.5 L57 9 L57 10.8 L13.3 10.8 Z" fill="#b4b4b4"/><path d="M13.3 38.5 L17 37 L19 41 L15 42 Z" fill="#b4b4b4"/><path d="M57 38.5 L53.3 37 L51.3 41 L55.3 42 Z" fill="#b4b4b4"/><circle cx="34.8" cy="26.3" r="20.2" fill="none" stroke="#5050ff" stroke-width="1.2"/><circle cx="34.8" cy="26.3" r="18.8" fill="#000" stroke="#f0f0f0" stroke-width="1.8"/><rect x="34" y="26" width="1.5" height="1" fill="#fff"/></svg>
<svg style="position:absolute;left:888px;top:572px;" width="142" height="52" viewBox="0 0 142 52"><rect x="15" y="5.5" width="49" height="39" fill="none" stroke="#b4b4b4" stroke-width="3.4"/><rect x="13.3" y="3.9" width="52.3" height="15" fill="#b4b4b4"/><rect x="17" y="8" width="45" height="10" fill="#000"/><path d="M17 8.5 H23 M17 11 H23 M17 13.5 H23 M17 16 H23 M56 8.5 H62 M56 11 H62 M56 13.5 H62 M56 16 H62" stroke="#5050ff" stroke-width="0.9"/><rect x="22.8" y="8" width="2.8" height="37" fill="#b4b4b4"/><rect x="53.7" y="8" width="2.8" height="37" fill="#b4b4b4"/><path d="M25.6 8.5 H53.7 M25.6 15.5 H53.7 M25.6 18.5 H53.7 M25.6 20.5 H53.7" stroke="#5050ff" stroke-width="0.9"/><path d="M25.6 11 H53.7" stroke="#b4b4b4" stroke-width="1.6"/><rect x="26.8" y="20.3" width="25.8" height="23.5" fill="none" stroke="#5050ff" stroke-width="1.1"/><path d="M21.8 20 V44.5 M57.5 20 V44.5" stroke="#0000ff" stroke-width="0.9"/><path d="M17 43.5 H21 M58 43.5 H62" stroke="#5050ff" stroke-width="0.9"/></svg>
<div style="position:absolute;left:0px;top:0px;width:1049px;height:1px;background:#1883d7"></div>
<div style="position:absolute;left:0px;top:681px;width:1049px;height:1px;background:#1883d7"></div>
<div style="position:absolute;left:0px;top:0px;width:1px;height:682px;background:#1883d7"></div>
<div style="position:absolute;left:1048px;top:0px;width:1px;height:682px;background:#1883d7"></div>
</body></html>
